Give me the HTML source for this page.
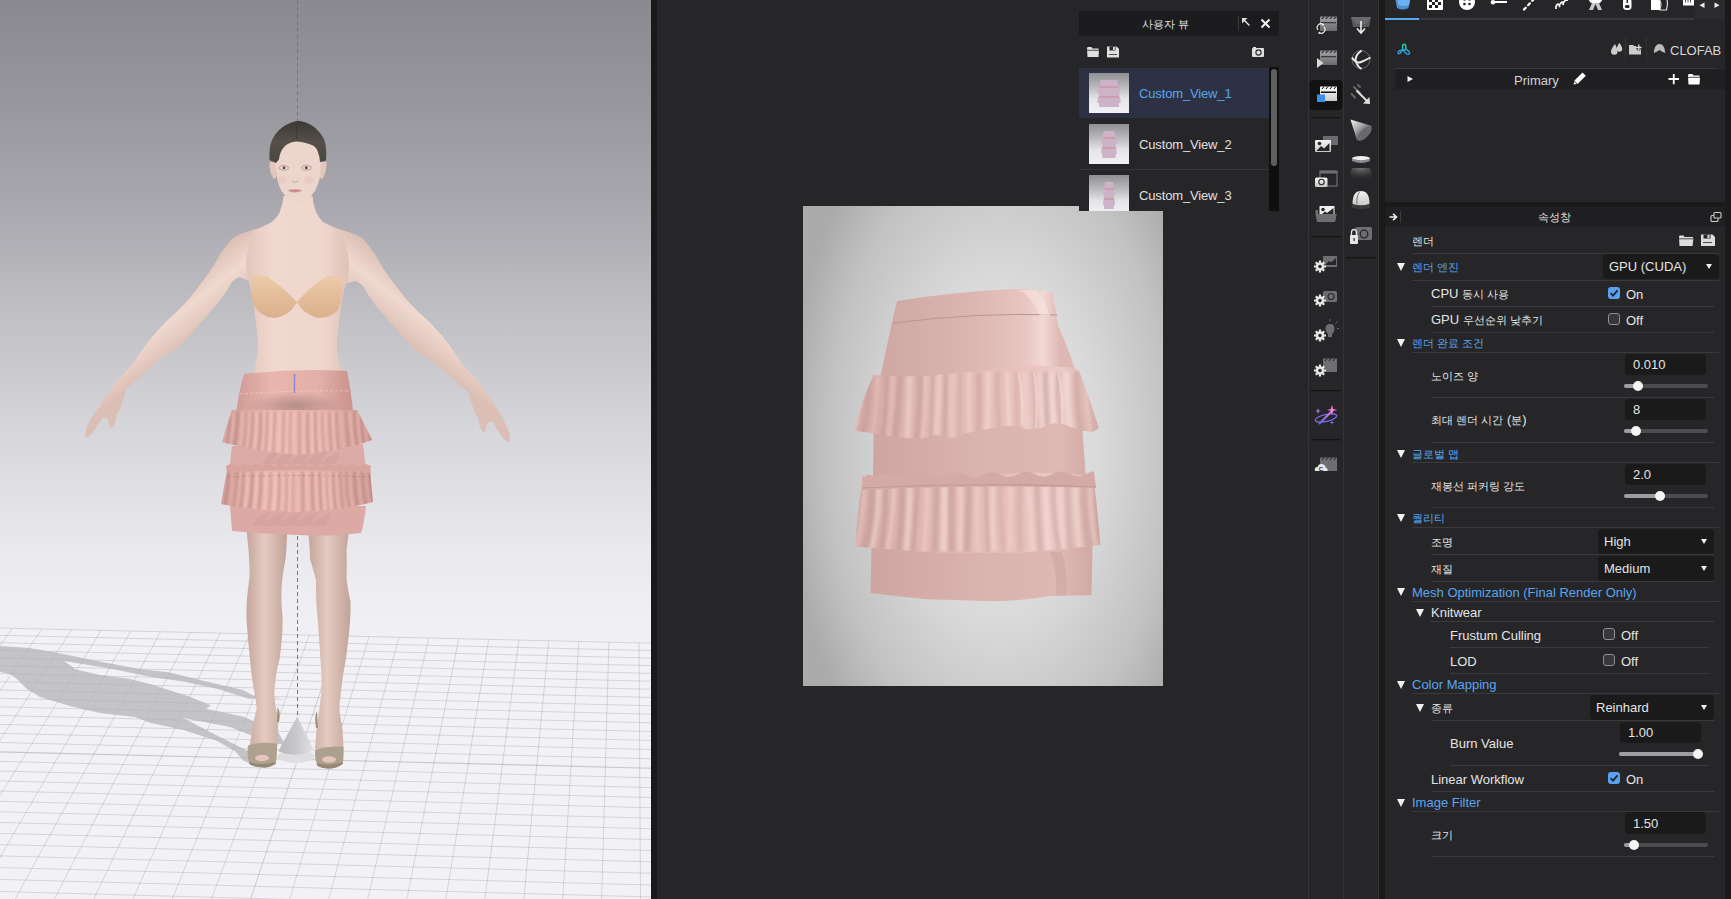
<!DOCTYPE html>
<html><head><meta charset="utf-8">
<style>
*{margin:0;padding:0;box-sizing:border-box}
html,body{width:1731px;height:899px;overflow:hidden;background:#262628;font-family:"Liberation Sans",sans-serif;}
.a{position:absolute}
#vp{left:0;top:0;width:651px;height:899px;background:linear-gradient(#8a8a90 0px,#a6a6ac 200px,#cdcdd2 400px,#e8e8ed 540px,#f1f1f5 640px,#f2f2f6 899px);overflow:hidden}
#div1{left:651px;top:0;width:6px;height:899px;background:#19191a}
#mid{left:657px;top:0;width:651px;height:899px;background:#262628}
#render{left:803px;top:206px;width:360px;height:480px;background:radial-gradient(ellipse 75% 60% at 50% 52%,#e6e6e6 0%,#d2d2d2 45%,#b2b2b2 100%);overflow:hidden}
#tb1{left:1308px;top:0;width:35px;height:899px;background:#262628;border-left:1px solid #343437}
#tb2{left:1343px;top:0;width:36px;height:899px;background:#262628;border-left:1px solid #343437;border-right:1px solid #343437}
#div2{left:1379px;top:0;width:6px;height:899px;background:#19191a}
#rp{left:1385px;top:0;width:340px;height:899px;background:#262628}
#rpedge{left:1725px;top:0;width:6px;height:899px;background:#1a1a1b}
.t{position:absolute;white-space:nowrap;font-size:13px;color:#e4e4e4;line-height:16px}
.k{font-size:11.3px}
.blue{color:#5aa5ee}
.ln{position:absolute;height:1px;background:#3a3a3d}
.inp{position:absolute;background:#1a1a1b;border-radius:4px}
.dd{position:absolute;background:#1a1a1b;border-radius:4px}
.ddtri{position:absolute;width:0;height:0;border-left:3.5px solid transparent;border-right:3.5px solid transparent;border-top:5.5px solid #eee;margin-left:1px}
.trk{position:absolute;height:4px;border-radius:2px;background:#4c4c4e}
.fill{position:absolute;height:4px;border-radius:2px;background:#9e9ea0}
.knob{position:absolute;width:10px;height:10px;border-radius:50%;background:#f4f4f4}
.cb{position:absolute;width:12px;height:12px;border-radius:3px;border:1.3px solid #909092;background:#38383a}
.cbon{position:absolute;width:12px;height:12px;border-radius:3px;background:#5aa2ec}
.cbon svg{position:absolute;left:0;top:0}
.tri{position:absolute;width:0;height:0;border-left:4.5px solid transparent;border-right:4.5px solid transparent;border-top:8px solid #f0f0f0}
.thumb{width:40px;height:40px;background:linear-gradient(#8d8d92 0%,#b8b8bc 35%,#e6e6ea 65%,#f2f2f6 100%);overflow:hidden}
.thumb:before{content:"";position:absolute;left:8px;top:7px;width:24px;height:26px;background:linear-gradient(#d0b8cc,#c4a8c0);border-radius:3px 3px 2px 2px;opacity:.95}
</style></head><body>
<div id="vp" class="a"><svg class="a" style="left:0;top:0" width="651" height="899" viewBox="0 0 651 899">
<defs>
<linearGradient id="bg" gradientUnits="userSpaceOnUse" x1="0" y1="0" x2="0" y2="899">
<stop offset="0" stop-color="#89898f"/><stop offset="0.111" stop-color="#96969c"/><stop offset="0.222" stop-color="#a7a7ad"/><stop offset="0.333" stop-color="#bcbcc1"/><stop offset="0.445" stop-color="#d0d0d5"/><stop offset="0.523" stop-color="#dcdce1"/><stop offset="0.612" stop-color="#e9e9ee"/><stop offset="0.667" stop-color="#eeeef2"/><stop offset="0.712" stop-color="#f1f1f5"/><stop offset="1" stop-color="#f2f2f6"/>
</linearGradient>
</defs>
<rect x="0" y="0" width="651" height="899" fill="url(#bg)"/>
<path d="M-573.82,614.64 L1215.95,656.34 L1507.81,1105.09 L-1156.05,1026.09 Z" fill="#f2f2f6"/>
<g opacity="1"><line x1="-718.80" y1="611.26" x2="1215.95" y2="656.34" stroke="rgba(40,40,60,0.17)" stroke-width="0.9"/><line x1="-729.87" y1="618.22" x2="1220.85" y2="663.88" stroke="rgba(40,40,60,0.17)" stroke-width="0.9"/><line x1="-741.12" y1="625.29" x2="1225.84" y2="671.54" stroke="rgba(40,40,60,0.17)" stroke-width="0.9"/><line x1="-752.55" y1="632.47" x2="1230.91" y2="679.34" stroke="rgba(40,40,60,0.17)" stroke-width="0.9"/><line x1="-764.18" y1="639.78" x2="1236.06" y2="687.27" stroke="rgba(40,40,60,0.17)" stroke-width="0.9"/><line x1="-776.00" y1="647.21" x2="1241.31" y2="695.33" stroke="rgba(40,40,60,0.17)" stroke-width="0.9"/><line x1="-788.03" y1="654.77" x2="1246.65" y2="703.54" stroke="rgba(40,40,60,0.17)" stroke-width="0.9"/><line x1="-800.26" y1="662.46" x2="1252.08" y2="711.90" stroke="rgba(40,40,60,0.17)" stroke-width="0.9"/><line x1="-812.71" y1="670.28" x2="1257.62" y2="720.40" stroke="rgba(40,40,60,0.17)" stroke-width="0.9"/><line x1="-825.37" y1="678.23" x2="1263.25" y2="729.06" stroke="rgba(40,40,60,0.17)" stroke-width="0.9"/><line x1="-838.26" y1="686.33" x2="1268.98" y2="737.87" stroke="rgba(40,40,60,0.17)" stroke-width="0.9"/><line x1="-851.37" y1="694.58" x2="1274.82" y2="746.85" stroke="rgba(40,40,60,0.17)" stroke-width="0.9"/><line x1="-864.73" y1="702.97" x2="1280.77" y2="756.00" stroke="rgba(40,40,60,0.17)" stroke-width="0.9"/><line x1="-878.32" y1="711.51" x2="1286.82" y2="765.31" stroke="rgba(40,40,60,0.17)" stroke-width="0.9"/><line x1="-892.16" y1="720.21" x2="1293.00" y2="774.80" stroke="rgba(40,40,60,0.17)" stroke-width="0.9"/><line x1="-906.26" y1="729.07" x2="1299.29" y2="784.47" stroke="rgba(40,40,60,0.22)" stroke-width="1.1"/><line x1="-920.63" y1="738.10" x2="1305.70" y2="794.33" stroke="rgba(40,40,60,0.17)" stroke-width="0.9"/><line x1="-935.26" y1="747.29" x2="1312.24" y2="804.38" stroke="rgba(40,40,60,0.17)" stroke-width="0.9"/><line x1="-950.17" y1="756.66" x2="1318.90" y2="814.63" stroke="rgba(40,40,60,0.17)" stroke-width="0.9"/><line x1="-965.37" y1="766.21" x2="1325.70" y2="825.08" stroke="rgba(40,40,60,0.17)" stroke-width="0.9"/><line x1="-980.86" y1="775.95" x2="1332.63" y2="835.75" stroke="rgba(40,40,60,0.17)" stroke-width="0.9"/><line x1="-996.65" y1="785.87" x2="1339.71" y2="846.62" stroke="rgba(40,40,60,0.17)" stroke-width="0.9"/><line x1="-1012.76" y1="795.99" x2="1346.93" y2="857.72" stroke="rgba(40,40,60,0.17)" stroke-width="0.9"/><line x1="-1029.19" y1="806.32" x2="1354.30" y2="869.05" stroke="rgba(40,40,60,0.17)" stroke-width="0.9"/><line x1="-1045.94" y1="816.85" x2="1361.82" y2="880.62" stroke="rgba(40,40,60,0.17)" stroke-width="0.9"/><line x1="-1063.04" y1="827.60" x2="1369.50" y2="892.43" stroke="rgba(40,40,60,0.17)" stroke-width="0.9"/><line x1="-1080.50" y1="838.56" x2="1377.34" y2="904.49" stroke="rgba(40,40,60,0.17)" stroke-width="0.9"/><line x1="-1098.31" y1="849.76" x2="1385.36" y2="916.81" stroke="rgba(40,40,60,0.17)" stroke-width="0.9"/><line x1="-1116.50" y1="861.19" x2="1393.55" y2="929.40" stroke="rgba(40,40,60,0.17)" stroke-width="0.9"/><line x1="-1135.07" y1="872.86" x2="1401.91" y2="942.26" stroke="rgba(40,40,60,0.17)" stroke-width="0.9"/><line x1="-1154.05" y1="884.79" x2="1410.47" y2="955.42" stroke="rgba(40,40,60,0.17)" stroke-width="0.9"/><line x1="-1173.43" y1="896.97" x2="1419.22" y2="968.87" stroke="rgba(40,40,60,0.17)" stroke-width="0.9"/><line x1="-1193.24" y1="909.42" x2="1428.16" y2="982.62" stroke="rgba(40,40,60,0.17)" stroke-width="0.9"/><line x1="-1213.49" y1="922.14" x2="1437.32" y2="996.70" stroke="rgba(40,40,60,0.17)" stroke-width="0.9"/><line x1="-1234.19" y1="935.15" x2="1446.68" y2="1011.10" stroke="rgba(40,40,60,0.17)" stroke-width="0.9"/><line x1="-1255.36" y1="948.46" x2="1456.27" y2="1025.84" stroke="rgba(40,40,60,0.17)" stroke-width="0.9"/><line x1="-1277.02" y1="962.07" x2="1466.09" y2="1040.93" stroke="rgba(40,40,60,0.17)" stroke-width="0.9"/><line x1="-1299.18" y1="975.99" x2="1476.14" y2="1056.39" stroke="rgba(40,40,60,0.17)" stroke-width="0.9"/><line x1="-1321.86" y1="990.25" x2="1486.44" y2="1072.23" stroke="rgba(40,40,60,0.17)" stroke-width="0.9"/><line x1="-1345.08" y1="1004.84" x2="1497.00" y2="1088.46" stroke="rgba(40,40,60,0.17)" stroke-width="0.9"/><line x1="-718.80" y1="611.26" x2="-1368.86" y2="1019.78" stroke="rgba(40,40,60,0.17)" stroke-width="0.9"/><line x1="-689.86" y1="611.94" x2="-1326.40" y2="1021.04" stroke="rgba(40,40,60,0.17)" stroke-width="0.9"/><line x1="-660.88" y1="612.61" x2="-1283.90" y2="1022.30" stroke="rgba(40,40,60,0.17)" stroke-width="0.9"/><line x1="-631.89" y1="613.29" x2="-1241.34" y2="1023.56" stroke="rgba(40,40,60,0.17)" stroke-width="0.9"/><line x1="-602.87" y1="613.96" x2="-1198.72" y2="1024.82" stroke="rgba(40,40,60,0.17)" stroke-width="0.9"/><line x1="-573.82" y1="614.64" x2="-1156.05" y2="1026.09" stroke="rgba(40,40,60,0.17)" stroke-width="0.9"/><line x1="-544.75" y1="615.32" x2="-1113.33" y2="1027.36" stroke="rgba(40,40,60,0.17)" stroke-width="0.9"/><line x1="-515.65" y1="616.00" x2="-1070.55" y2="1028.63" stroke="rgba(40,40,60,0.17)" stroke-width="0.9"/><line x1="-486.53" y1="616.67" x2="-1027.71" y2="1029.90" stroke="rgba(40,40,60,0.17)" stroke-width="0.9"/><line x1="-457.39" y1="617.35" x2="-984.83" y2="1031.17" stroke="rgba(40,40,60,0.17)" stroke-width="0.9"/><line x1="-428.21" y1="618.03" x2="-941.88" y2="1032.44" stroke="rgba(40,40,60,0.17)" stroke-width="0.9"/><line x1="-399.02" y1="618.71" x2="-898.88" y2="1033.72" stroke="rgba(40,40,60,0.17)" stroke-width="0.9"/><line x1="-369.80" y1="619.39" x2="-855.83" y2="1034.99" stroke="rgba(40,40,60,0.17)" stroke-width="0.9"/><line x1="-340.55" y1="620.08" x2="-812.72" y2="1036.27" stroke="rgba(40,40,60,0.17)" stroke-width="0.9"/><line x1="-311.28" y1="620.76" x2="-769.56" y2="1037.55" stroke="rgba(40,40,60,0.17)" stroke-width="0.9"/><line x1="-281.98" y1="621.44" x2="-726.34" y2="1038.83" stroke="rgba(40,40,60,0.17)" stroke-width="0.9"/><line x1="-252.66" y1="622.12" x2="-683.06" y2="1040.12" stroke="rgba(40,40,60,0.17)" stroke-width="0.9"/><line x1="-223.31" y1="622.81" x2="-639.73" y2="1041.40" stroke="rgba(40,40,60,0.17)" stroke-width="0.9"/><line x1="-193.93" y1="623.49" x2="-596.35" y2="1042.69" stroke="rgba(40,40,60,0.17)" stroke-width="0.9"/><line x1="-164.53" y1="624.18" x2="-552.90" y2="1043.98" stroke="rgba(40,40,60,0.17)" stroke-width="0.9"/><line x1="-135.11" y1="624.86" x2="-509.40" y2="1045.27" stroke="rgba(40,40,60,0.17)" stroke-width="0.9"/><line x1="-105.66" y1="625.55" x2="-465.85" y2="1046.56" stroke="rgba(40,40,60,0.17)" stroke-width="0.9"/><line x1="-76.18" y1="626.24" x2="-422.24" y2="1047.85" stroke="rgba(40,40,60,0.17)" stroke-width="0.9"/><line x1="-46.68" y1="626.92" x2="-378.57" y2="1049.15" stroke="rgba(40,40,60,0.17)" stroke-width="0.9"/><line x1="-17.15" y1="627.61" x2="-334.85" y2="1050.44" stroke="rgba(40,40,60,0.17)" stroke-width="0.9"/><line x1="12.40" y1="628.30" x2="-291.07" y2="1051.74" stroke="rgba(40,40,60,0.17)" stroke-width="0.9"/><line x1="41.98" y1="628.99" x2="-247.23" y2="1053.04" stroke="rgba(40,40,60,0.17)" stroke-width="0.9"/><line x1="71.58" y1="629.68" x2="-203.34" y2="1054.34" stroke="rgba(40,40,60,0.17)" stroke-width="0.9"/><line x1="101.21" y1="630.37" x2="-159.39" y2="1055.65" stroke="rgba(40,40,60,0.17)" stroke-width="0.9"/><line x1="130.87" y1="631.06" x2="-115.38" y2="1056.95" stroke="rgba(40,40,60,0.17)" stroke-width="0.9"/><line x1="160.55" y1="631.75" x2="-71.31" y2="1058.26" stroke="rgba(40,40,60,0.17)" stroke-width="0.9"/><line x1="190.26" y1="632.44" x2="-27.19" y2="1059.57" stroke="rgba(40,40,60,0.17)" stroke-width="0.9"/><line x1="219.99" y1="633.14" x2="16.99" y2="1060.88" stroke="rgba(40,40,60,0.17)" stroke-width="0.9"/><line x1="249.75" y1="633.83" x2="61.22" y2="1062.19" stroke="rgba(40,40,60,0.17)" stroke-width="0.9"/><line x1="279.54" y1="634.52" x2="105.52" y2="1063.50" stroke="rgba(40,40,60,0.17)" stroke-width="0.9"/><line x1="309.35" y1="635.22" x2="149.87" y2="1064.82" stroke="rgba(40,40,60,0.17)" stroke-width="0.9"/><line x1="339.19" y1="635.91" x2="194.28" y2="1066.14" stroke="rgba(40,40,60,0.21)" stroke-width="0.9"/><line x1="369.05" y1="636.61" x2="238.75" y2="1067.45" stroke="rgba(40,40,60,0.17)" stroke-width="0.9"/><line x1="398.94" y1="637.31" x2="283.27" y2="1068.77" stroke="rgba(40,40,60,0.17)" stroke-width="0.9"/><line x1="428.85" y1="638.00" x2="327.86" y2="1070.10" stroke="rgba(40,40,60,0.17)" stroke-width="0.9"/><line x1="458.80" y1="638.70" x2="372.50" y2="1071.42" stroke="rgba(40,40,60,0.17)" stroke-width="0.9"/><line x1="488.76" y1="639.40" x2="417.20" y2="1072.75" stroke="rgba(40,40,60,0.17)" stroke-width="0.9"/><line x1="518.76" y1="640.10" x2="461.96" y2="1074.07" stroke="rgba(40,40,60,0.17)" stroke-width="0.9"/><line x1="548.78" y1="640.80" x2="506.77" y2="1075.40" stroke="rgba(40,40,60,0.17)" stroke-width="0.9"/><line x1="578.83" y1="641.50" x2="551.65" y2="1076.73" stroke="rgba(40,40,60,0.17)" stroke-width="0.9"/><line x1="608.90" y1="642.20" x2="596.59" y2="1078.07" stroke="rgba(40,40,60,0.17)" stroke-width="0.9"/><line x1="639.00" y1="642.90" x2="641.58" y2="1079.40" stroke="rgba(40,40,60,0.17)" stroke-width="0.9"/><line x1="669.13" y1="643.60" x2="686.63" y2="1080.74" stroke="rgba(40,40,60,0.17)" stroke-width="0.9"/><line x1="699.28" y1="644.30" x2="731.74" y2="1082.07" stroke="rgba(40,40,60,0.17)" stroke-width="0.9"/><line x1="729.46" y1="645.01" x2="776.92" y2="1083.41" stroke="rgba(40,40,60,0.17)" stroke-width="0.9"/><line x1="759.66" y1="645.71" x2="822.15" y2="1084.76" stroke="rgba(40,40,60,0.17)" stroke-width="0.9"/><line x1="789.90" y1="646.42" x2="867.44" y2="1086.10" stroke="rgba(40,40,60,0.17)" stroke-width="0.9"/><line x1="820.15" y1="647.12" x2="912.79" y2="1087.44" stroke="rgba(40,40,60,0.17)" stroke-width="0.9"/><line x1="850.44" y1="647.83" x2="958.20" y2="1088.79" stroke="rgba(40,40,60,0.17)" stroke-width="0.9"/><line x1="880.75" y1="648.53" x2="1003.67" y2="1090.14" stroke="rgba(40,40,60,0.17)" stroke-width="0.9"/><line x1="911.09" y1="649.24" x2="1049.20" y2="1091.49" stroke="rgba(40,40,60,0.17)" stroke-width="0.9"/><line x1="941.46" y1="649.95" x2="1094.78" y2="1092.84" stroke="rgba(40,40,60,0.17)" stroke-width="0.9"/><line x1="971.85" y1="650.66" x2="1140.43" y2="1094.19" stroke="rgba(40,40,60,0.17)" stroke-width="0.9"/><line x1="1002.27" y1="651.36" x2="1186.14" y2="1095.55" stroke="rgba(40,40,60,0.17)" stroke-width="0.9"/><line x1="1032.71" y1="652.07" x2="1231.91" y2="1096.91" stroke="rgba(40,40,60,0.17)" stroke-width="0.9"/><line x1="1063.18" y1="652.78" x2="1277.75" y2="1098.27" stroke="rgba(40,40,60,0.17)" stroke-width="0.9"/><line x1="1093.68" y1="653.49" x2="1323.64" y2="1099.63" stroke="rgba(40,40,60,0.17)" stroke-width="0.9"/><line x1="1124.21" y1="654.21" x2="1369.59" y2="1100.99" stroke="rgba(40,40,60,0.17)" stroke-width="0.9"/><line x1="1154.76" y1="654.92" x2="1415.60" y2="1102.36" stroke="rgba(40,40,60,0.17)" stroke-width="0.9"/><line x1="1185.34" y1="655.63" x2="1461.68" y2="1103.72" stroke="rgba(40,40,60,0.17)" stroke-width="0.9"/></g>
<path d="M0,646 L29,648 L56,652.5 L85,658.5 L110,663.5 L140,669 L170,672.5 L203,680.7 L243,690 L254,696 L286,699.4 L249,698.7 L217,688.7 L183,681.4 L150,676.7 L110,668.5 L64,661 L76,669.5 L100,675 L130,679 L150,684 L190,696.7 L211,705.4 L206,708.7 L243.5,716.8 L278,731.4 L285,745 L268,742 L230,727 L183,718 L216,735 L250,752 L252,764 L243.5,760.8 L235.4,751.5 L216.8,740.8 L183.4,730 L150,722.8 L135,717 L100,713 L70,706 L40,697 L27,689 L17,679 L10,674 L0,672 Z" fill="#b3b3b8" fill-opacity="0.75"/>
<defs>
  <linearGradient id="skinArmL" gradientUnits="userSpaceOnUse" x1="150" y1="300" x2="185" y2="345"><stop offset="0" stop-color="#dabcb1"/><stop offset="0.5" stop-color="#f0d9d0"/><stop offset="1" stop-color="#dcbfb4"/></linearGradient>
  <linearGradient id="skinArmR" gradientUnits="userSpaceOnUse" x1="445" y1="300" x2="410" y2="345"><stop offset="0" stop-color="#dabcb1"/><stop offset="0.5" stop-color="#f0d9d0"/><stop offset="1" stop-color="#dcbfb4"/></linearGradient>
  <linearGradient id="skinTorso" x1="0" y1="0" x2="1" y2="0"><stop offset="0" stop-color="#e2c6bb"/><stop offset="0.25" stop-color="#f0d8ce"/><stop offset="0.75" stop-color="#efd6cc"/><stop offset="1" stop-color="#dfc2b7"/></linearGradient>
  <linearGradient id="skinLeg" x1="0" y1="0" x2="1" y2="0"><stop offset="0" stop-color="#c6a69b"/><stop offset="0.45" stop-color="#e4cbc1"/><stop offset="1" stop-color="#c2a297"/></linearGradient>
  <linearGradient id="skirtG" x1="0" y1="0" x2="1" y2="0"><stop offset="0" stop-color="#cf9a94"/><stop offset="0.3" stop-color="#e8b6ae"/><stop offset="0.7" stop-color="#e4b0a9"/><stop offset="1" stop-color="#c9928c"/></linearGradient>
  <linearGradient id="braG" x1="0" y1="0" x2="0" y2="1"><stop offset="0" stop-color="#edcaa8"/><stop offset="1" stop-color="#d9b08c"/></linearGradient>
  <linearGradient id="hairG" x1="0" y1="0" x2="0" y2="1"><stop offset="0" stop-color="#3c3834"/><stop offset="0.5" stop-color="#55504a"/><stop offset="1" stop-color="#4a4641"/></linearGradient>
  <linearGradient id="coneL" x1="0" y1="0" x2="1" y2="0"><stop offset="0" stop-color="#b8b8bc"/><stop offset="0.5" stop-color="#c8c8cc"/><stop offset="1" stop-color="#e2e2e4"/></linearGradient>
</defs>
<!-- dashed center line -->
<path d="M297.5 0 V124" stroke="#76767c" stroke-width="1" stroke-dasharray="4 3"/>
<path d="M297.5 536 V716" stroke="#76767c" stroke-width="1" stroke-dasharray="4 3"/>
<!-- left arm -->
<path id="armL" d="M272,223 Q258,229 246,232 Q236,235 231,240 Q224,248 219,256 Q214,266 208,274 Q198,288 188,300 Q178,311 170,318 Q165,322 161,327 Q152,336 145,346 Q138,356 131,366 Q123,375 116,382 Q110,390 106,397 Q101,404 97,410 Q92,416 89,422 Q86,428 85,435 Q86,438 88,437 Q93,433 96,428 Q100,422 103,417 L108,419 Q109,425 110,428 Q113,428 114,425 Q117,420 116,416 Q120,410 122,403 Q124,398 125,394 Q126,390 127,388 Q135,381 142,375 Q152,366 161,358 Q170,352 180,346 Q190,335 200,324 Q206,318 210,312 Q215,307 219,302 Q222,297 226,292 Q229,287 232,282 Q235,279 239,277 L252,282 L262,238 Z" fill="url(#skinArmL)"/>
<!-- right arm -->
<path d="M323,223 Q337,229 349,232 Q359,235 364,240 Q371,248 376,256 Q381,266 387,274 Q397,288 407,300 Q417,311 425,318 Q430,322 434,327 Q443,336 450,346 Q457,356 464,366 Q472,375 479,382 Q485,390 489,397 Q494,404 498,410 Q503,418 506,425 Q510,432 510,440 Q509,443 507,442 Q502,438 499,432 Q495,426 492,421 L487,423 Q486,429 485,432 Q482,432 481,429 Q478,424 479,420 Q475,414 473,407 Q471,402 470,398 Q469,394 468,392 Q460,385 453,379 Q443,370 434,362 Q425,356 415,350 Q405,339 395,328 Q389,322 385,316 Q380,311 376,306 Q373,301 369,296 Q366,291 363,286 Q360,283 356,281 L343,284 L333,238 Z" fill="url(#skinArmR)"/>
<!-- torso + neck -->
<path d="M283.5,196 Q282,214 272,222 Q262,227 254,231 Q248,245 246,262 Q246,272 248,279 Q251,289 253,300 Q256,322 258,340 Q259,356 253,374 L342,372 Q336,356 337,340 Q339,322 342,300 Q344,289 347,281 Q349,272 349,262 Q347,245 341,231 Q333,227 323,222 Q314,214 312.5,196 Z" fill="url(#skinTorso)"/>
<!-- bra -->
<path d="M251,277 Q258,274 266,276 Q282,286 297,302 Q290,316 274,318 Q256,316 252,300 Z" fill="url(#braG)"/>
<path d="M297,302 Q310,286 328,276 Q336,275 342,278 Q343,300 338,310 Q330,318 318,318 Q303,314 297,302 Z" fill="url(#braG)"/>
<!-- head -->
<path d="M269.5,162 Q269,172 273.7,179 L276,178 L276,162 Z M326.5,162 Q327,172 322.4,179 L320,178 L320,162 Z" fill="#e2c6bc"/>
<path d="M275.5,160 Q275.5,172 277,178.4 Q279,187 282.2,192 Q288,200 294.8,202.6 Q300,203 304.3,201.6 Q311,197 315,191 Q319,183 320.2,176.2 Q321,168 320.5,158 Q321,146 310,139 Q297,134 285,139 Q275,146 275.5,160 Z" fill="#ecd5cc"/>
<path d="M269.5,160 Q269,146 272,140 Q280,124 298,120.8 Q316,123 324.4,140 Q327,148 326,160.4 L320,162 Q319,150 314,146 Q306,142 297,141.4 Q288,142 284.3,146.7 Q280,151 279,159.4 L276,163 Z" fill="url(#hairG)"/>
<path d="M297,124 Q296,132 297,141" stroke="#2e2a26" stroke-width="0.8" opacity="0.6" fill="none"/>
<g fill="#c98a88" opacity="0.55"><ellipse cx="283.8" cy="167.8" rx="5.5" ry="3"/><ellipse cx="306.5" cy="167.8" rx="5.5" ry="3"/></g>
<g fill="#e4ece4"><ellipse cx="283.8" cy="167.8" rx="3.6" ry="1.6"/><ellipse cx="306.5" cy="167.8" rx="3.6" ry="1.6"/></g>
<g fill="#4a5048"><circle cx="284" cy="167.8" r="1.5"/><circle cx="306.3" cy="167.8" r="1.5"/></g>
<g fill="#e4a8a4" opacity="0.2"><ellipse cx="282" cy="180" rx="5" ry="4"/><ellipse cx="309" cy="180" rx="5" ry="4"/></g>
<path d="M292 181 Q294.8 184 298 181" stroke="#c8a098" stroke-width="0.9" fill="none"/>
<path d="M287.5,190.5 Q294.8,188 302.2,190.5 Q295,194.5 287.5,190.5 Z" fill="#cc8e8c"/>
<!-- legs -->
<path d="M247,528 L247,535 Q250,558 249.5,578 Q246,600 246.5,620 Q248,640 250,660 Q252,680 254,690 Q257,705 256.5,710 Q252,725 250,745 L277.5,745 Q278,725 278.5,718 Q274,705 274.5,690 Q276,670 279.5,660 Q283,635 282.5,616 Q281,600 281.5,590 Q282,575 285.5,559 Q287,545 287,528 Z" fill="url(#skinLeg)"/>
<path d="M308.5,528 L308.5,535 Q310,550 310,559 Q314,572 316,580 Q316,595 316.5,605 Q319,635 320.5,660 Q322,680 321.5,690 Q320,705 319,712 Q316,730 315,749 L343.5,749 Q343,735 342,725 Q339,712 339.5,705 Q341,690 343,675 Q346,660 347,650 Q351,620 350.5,602 Q347,585 346.5,578 Q347,560 346.5,550 Q348,540 349,528 Z" fill="url(#skinLeg)"/>
<!-- skirt waistband -->
<path d="M244,374 Q296,368 347,371 Q351,390 353,412 L236,414 Q239,390 244,374 Z" fill="url(#skirtG)"/>
<radialGradient id="wbShade"><stop offset="0" stop-color="#a07c78" stop-opacity="0.7"/><stop offset="0.6" stop-color="#a88480" stop-opacity="0.35"/><stop offset="1" stop-color="#b08a86" stop-opacity="0"/></radialGradient>
<ellipse cx="295" cy="406" rx="48" ry="14" fill="url(#wbShade)"/>
<path d="M240,394 Q296,390 350,391" stroke="#f4d0c8" stroke-width="0.8" stroke-dasharray="3 2" fill="none" opacity="0.8"/>
<path d="M294.5,374 V393" stroke="#8c88d0" stroke-width="1.5"/>
<!-- skirt lower layer -->
<path d="M230,506 L366,506 Q364,525 361,533 Q330,537 298,535 Q262,534 232,531 Z" fill="#dca9a4"/><path d="M252,526 Q258,514 270,512 L262,526 Q272,514 286,512 L278,526 Q288,514 302,512 L294,526 Q304,514 318,512 L310,526 Q320,516 330,514 L326,526 Z" fill="#c99590" opacity="0.28"/>
<!-- middle band -->
<path d="M232,446 L363,444 L366,470 L229,471 Z" fill="#dcaba6"/><path d="M262,464 Q268,452 280,450 L272,464 Q282,452 296,450 L288,464 Q298,452 312,450 L304,464 Q314,452 328,450 L320,464 Q330,454 340,452 L336,464 Z" fill="#c99590" opacity="0.3"/>
<!-- ruffle 2 -->
<path d="M228,467 Q298,462 370,467 Q371,485 373,502 Q345,510 298,512 Q250,510 221,504 Q224,485 228,467 Z" fill="url(#skirtG)"/>
<path d="M226,466 Q232,462 238,466 Q244,462 250,466 Q256,462 262,466 Q268,462 274,466 Q280,462 286,466 Q292,462 298,466 Q304,462 310,466 Q316,462 322,466 Q328,462 334,466 Q340,462 346,466 Q352,462 358,466 Q364,462 371,466 L370,473 Q298,467 227,473 Z" fill="#d9a49e"/>
<path d="M228,477 Q298,474 370,477" stroke="#b04848" stroke-width="0.8" stroke-dasharray="2 3" opacity="0.6" fill="none"/>
<!-- ruffle 1 -->
<path d="M232,410 L357,410 Q365,425 372,440 Q345,450 298,455 Q252,450 222,442 Q227,425 232,410 Z" fill="url(#skirtG)"/>
<!-- skirt folds -->
<clipPath id="cf1"><path d="M232,410 L357,410 Q365,425 372,440 Q345,450 298,455 Q252,450 222,442 Q227,425 232,410 Z"/></clipPath>
<clipPath id="cf2"><path d="M228,467 Q298,462 370,467 Q371,485 373,502 Q345,510 298,512 Q250,510 221,504 Q224,485 228,467 Z"/></clipPath>
<filter id="fb2" x="-5%" y="-5%" width="110%" height="110%"><feGaussianBlur stdDeviation="0.9"/></filter>
<g clip-path="url(#cf1)"><g filter="url(#fb2)"><path d="M222.0,412 Q222.2,434.0 216.0,456" stroke="#b27c76" stroke-width="3.4" opacity="0.34" fill="none"/><path d="M225.9,412 Q225.9,434.0 220.2,455" stroke="#f8d8d0" stroke-width="2.4" opacity="0.35" fill="none"/><path d="M229.8,412 Q230.2,434.0 224.4,456" stroke="#b27c76" stroke-width="3.2" opacity="0.27" fill="none"/><path d="M233.8,412 Q233.2,434.0 228.7,455" stroke="#f8d8d0" stroke-width="1.6" opacity="0.50" fill="none"/><path d="M237.9,412 Q236.5,434.0 233.1,456" stroke="#b27c76" stroke-width="3.5" opacity="0.44" fill="none"/><path d="M242.2,412 Q242.7,434.0 237.8,455" stroke="#f8d8d0" stroke-width="2.4" opacity="0.34" fill="none"/><path d="M246.6,412 Q246.7,434.0 242.6,456" stroke="#b27c76" stroke-width="2.1" opacity="0.29" fill="none"/><path d="M249.7,412 Q248.9,434.0 245.8,455" stroke="#f8d8d0" stroke-width="1.5" opacity="0.42" fill="none"/><path d="M252.7,412 Q253.7,434.0 249.1,456" stroke="#b27c76" stroke-width="2.8" opacity="0.38" fill="none"/><path d="M256.6,412 Q256.6,434.0 253.3,455" stroke="#f8d8d0" stroke-width="2.5" opacity="0.41" fill="none"/><path d="M260.5,412 Q261.9,434.0 257.5,456" stroke="#b27c76" stroke-width="3.5" opacity="0.42" fill="none"/><path d="M264.0,412 Q264.6,434.0 261.3,455" stroke="#f8d8d0" stroke-width="2.0" opacity="0.36" fill="none"/><path d="M267.6,412 Q266.3,434.0 265.2,456" stroke="#b27c76" stroke-width="3.1" opacity="0.33" fill="none"/><path d="M271.1,412 Q272.2,434.0 269.0,455" stroke="#f8d8d0" stroke-width="2.1" opacity="0.54" fill="none"/><path d="M274.7,412 Q273.2,434.0 272.9,456" stroke="#b27c76" stroke-width="2.3" opacity="0.43" fill="none"/><path d="M279.4,412 Q279.3,434.0 278.0,455" stroke="#f8d8d0" stroke-width="3.0" opacity="0.40" fill="none"/><path d="M284.1,412 Q284.5,434.0 283.0,456" stroke="#b27c76" stroke-width="3.2" opacity="0.30" fill="none"/><path d="M287.3,412 Q286.0,434.0 286.4,455" stroke="#f8d8d0" stroke-width="2.0" opacity="0.54" fill="none"/><path d="M290.4,412 Q289.3,434.0 289.8,456" stroke="#b27c76" stroke-width="2.4" opacity="0.27" fill="none"/><path d="M294.9,412 Q293.6,434.0 294.7,455" stroke="#f8d8d0" stroke-width="2.7" opacity="0.34" fill="none"/><path d="M299.4,412 Q299.3,434.0 299.6,456" stroke="#b27c76" stroke-width="2.3" opacity="0.40" fill="none"/><path d="M303.6,412 Q302.4,434.0 304.0,455" stroke="#f8d8d0" stroke-width="2.5" opacity="0.33" fill="none"/><path d="M307.7,412 Q306.8,434.0 308.5,456" stroke="#b27c76" stroke-width="2.4" opacity="0.44" fill="none"/><path d="M311.5,412 Q312.4,434.0 312.6,455" stroke="#f8d8d0" stroke-width="2.0" opacity="0.52" fill="none"/><path d="M315.4,412 Q315.0,434.0 316.8,456" stroke="#b27c76" stroke-width="3.3" opacity="0.38" fill="none"/><path d="M318.8,412 Q317.6,434.0 320.5,455" stroke="#f8d8d0" stroke-width="3.0" opacity="0.35" fill="none"/><path d="M322.2,412 Q323.0,434.0 324.2,456" stroke="#b27c76" stroke-width="2.5" opacity="0.31" fill="none"/><path d="M325.7,412 Q324.4,434.0 328.0,455" stroke="#f8d8d0" stroke-width="1.6" opacity="0.45" fill="none"/><path d="M329.2,412 Q329.5,434.0 331.8,456" stroke="#b27c76" stroke-width="2.6" opacity="0.34" fill="none"/><path d="M332.7,412 Q334.1,434.0 335.5,455" stroke="#f8d8d0" stroke-width="2.2" opacity="0.44" fill="none"/><path d="M336.2,412 Q335.3,434.0 339.3,456" stroke="#b27c76" stroke-width="2.2" opacity="0.43" fill="none"/><path d="M340.9,412 Q341.9,434.0 344.4,455" stroke="#f8d8d0" stroke-width="1.9" opacity="0.35" fill="none"/><path d="M345.7,412 Q347.0,434.0 349.5,456" stroke="#b27c76" stroke-width="2.3" opacity="0.44" fill="none"/><path d="M350.1,412 Q351.3,434.0 354.4,455" stroke="#f8d8d0" stroke-width="2.4" opacity="0.41" fill="none"/><path d="M354.6,412 Q353.2,434.0 359.2,456" stroke="#b27c76" stroke-width="3.4" opacity="0.30" fill="none"/><path d="M357.8,412 Q358.4,434.0 362.7,455" stroke="#f8d8d0" stroke-width="1.9" opacity="0.51" fill="none"/><path d="M361.0,412 Q360.4,434.0 366.1,456" stroke="#b27c76" stroke-width="2.3" opacity="0.39" fill="none"/><path d="M365.2,412 Q363.9,434.0 370.7,455" stroke="#f8d8d0" stroke-width="1.8" opacity="0.44" fill="none"/><path d="M369.4,412 Q369.8,434.0 375.2,456" stroke="#b27c76" stroke-width="2.4" opacity="0.43" fill="none"/><path d="M374.1,412 Q373.2,434.0 380.3,455" stroke="#f8d8d0" stroke-width="1.5" opacity="0.37" fill="none"/></g></g>
<g clip-path="url(#cf2)"><g filter="url(#fb2)"><path d="M220.0,472 Q218.7,493.0 213.8,514" stroke="#b27c76" stroke-width="2.3" opacity="0.32" fill="none"/><path d="M223.9,472 Q224.1,493.0 218.0,513" stroke="#f8d8d0" stroke-width="1.7" opacity="0.39" fill="none"/><path d="M227.8,472 Q229.2,493.0 222.2,514" stroke="#b27c76" stroke-width="3.0" opacity="0.39" fill="none"/><path d="M232.6,472 Q232.8,493.0 227.4,513" stroke="#f8d8d0" stroke-width="1.7" opacity="0.31" fill="none"/><path d="M237.3,472 Q238.6,493.0 232.5,514" stroke="#b27c76" stroke-width="3.1" opacity="0.44" fill="none"/><path d="M240.4,472 Q238.9,493.0 235.8,513" stroke="#f8d8d0" stroke-width="2.5" opacity="0.42" fill="none"/><path d="M243.4,472 Q242.9,493.0 239.1,514" stroke="#b27c76" stroke-width="3.5" opacity="0.27" fill="none"/><path d="M247.9,472 Q248.0,493.0 243.9,513" stroke="#f8d8d0" stroke-width="2.6" opacity="0.53" fill="none"/><path d="M252.3,472 Q253.0,493.0 248.7,514" stroke="#b27c76" stroke-width="3.2" opacity="0.43" fill="none"/><path d="M256.8,472 Q256.4,493.0 253.6,513" stroke="#f8d8d0" stroke-width="2.5" opacity="0.53" fill="none"/><path d="M261.3,472 Q261.0,493.0 258.4,514" stroke="#b27c76" stroke-width="3.2" opacity="0.42" fill="none"/><path d="M266.0,472 Q266.2,493.0 263.5,513" stroke="#f8d8d0" stroke-width="2.4" opacity="0.40" fill="none"/><path d="M270.8,472 Q271.1,493.0 268.6,514" stroke="#b27c76" stroke-width="2.1" opacity="0.38" fill="none"/><path d="M274.9,472 Q276.4,493.0 273.1,513" stroke="#f8d8d0" stroke-width="2.8" opacity="0.48" fill="none"/><path d="M279.1,472 Q279.8,493.0 277.6,514" stroke="#b27c76" stroke-width="2.9" opacity="0.34" fill="none"/><path d="M282.9,472 Q283.9,493.0 281.7,513" stroke="#f8d8d0" stroke-width="1.6" opacity="0.49" fill="none"/><path d="M286.7,472 Q287.0,493.0 285.8,514" stroke="#b27c76" stroke-width="2.7" opacity="0.30" fill="none"/><path d="M289.7,472 Q290.3,493.0 289.1,513" stroke="#f8d8d0" stroke-width="2.2" opacity="0.45" fill="none"/><path d="M292.8,472 Q292.0,493.0 292.4,514" stroke="#b27c76" stroke-width="2.0" opacity="0.31" fill="none"/><path d="M297.6,472 Q298.2,493.0 297.6,513" stroke="#f8d8d0" stroke-width="1.8" opacity="0.34" fill="none"/><path d="M302.5,472 Q302.9,493.0 302.9,514" stroke="#b27c76" stroke-width="2.7" opacity="0.43" fill="none"/><path d="M307.3,472 Q306.8,493.0 308.1,513" stroke="#f8d8d0" stroke-width="2.5" opacity="0.35" fill="none"/><path d="M312.1,472 Q313.0,493.0 313.2,514" stroke="#b27c76" stroke-width="3.4" opacity="0.43" fill="none"/><path d="M315.9,472 Q315.6,493.0 317.4,513" stroke="#f8d8d0" stroke-width="2.4" opacity="0.38" fill="none"/><path d="M319.8,472 Q319.8,493.0 321.6,514" stroke="#b27c76" stroke-width="3.3" opacity="0.42" fill="none"/><path d="M323.1,472 Q323.7,493.0 325.1,513" stroke="#f8d8d0" stroke-width="2.9" opacity="0.37" fill="none"/><path d="M326.3,472 Q326.2,493.0 328.7,514" stroke="#b27c76" stroke-width="2.4" opacity="0.29" fill="none"/><path d="M329.7,472 Q329.4,493.0 332.3,513" stroke="#f8d8d0" stroke-width="2.4" opacity="0.42" fill="none"/><path d="M333.0,472 Q334.0,493.0 335.9,514" stroke="#b27c76" stroke-width="3.5" opacity="0.34" fill="none"/><path d="M336.7,472 Q335.4,493.0 339.8,513" stroke="#f8d8d0" stroke-width="1.5" opacity="0.52" fill="none"/><path d="M340.3,472 Q340.9,493.0 343.7,514" stroke="#b27c76" stroke-width="2.9" opacity="0.31" fill="none"/><path d="M343.4,472 Q344.2,493.0 347.0,513" stroke="#f8d8d0" stroke-width="1.5" opacity="0.33" fill="none"/><path d="M346.5,472 Q345.0,493.0 350.4,514" stroke="#b27c76" stroke-width="3.2" opacity="0.30" fill="none"/><path d="M350.4,472 Q349.3,493.0 354.6,513" stroke="#f8d8d0" stroke-width="1.6" opacity="0.46" fill="none"/><path d="M354.3,472 Q354.7,493.0 358.8,514" stroke="#b27c76" stroke-width="3.0" opacity="0.41" fill="none"/><path d="M358.2,472 Q359.5,493.0 363.0,513" stroke="#f8d8d0" stroke-width="2.5" opacity="0.35" fill="none"/><path d="M362.1,472 Q361.1,493.0 367.2,514" stroke="#b27c76" stroke-width="2.0" opacity="0.34" fill="none"/><path d="M366.0,472 Q366.7,493.0 371.5,513" stroke="#f8d8d0" stroke-width="1.8" opacity="0.37" fill="none"/><path d="M370.0,472 Q370.6,493.0 375.8,514" stroke="#b27c76" stroke-width="2.8" opacity="0.37" fill="none"/><path d="M373.7,472 Q374.4,493.0 379.7,513" stroke="#f8d8d0" stroke-width="2.1" opacity="0.50" fill="none"/></g></g>
<!-- shoes -->
<path d="M248,745.5 Q262,741 277,744 Q277.5,756 275.5,764 Q268,768 263.9,767.5 Q253,767 249.5,764 Q246.5,756 248,745.5 Z" fill="#aea28e"/>
<path d="M315.3,749.8 Q330,745 343.5,747 Q344,757 342.7,764 Q336,768.5 329,768.6 Q321,768 317.4,765.7 Q314,757 315.3,749.8 Z" fill="#ada18d"/>
<path d="M249.5,762 Q262,766 275.5,762 L275.5,764 Q268,768 263.9,767.5 Q253,767 249.5,764 Z M317,763 Q330,767 342.7,762 L342.7,764 Q336,768.5 329,768.6 Q321,768 317.4,765.7 Z" fill="#948874"/>
<g fill="#e6c4bc"><ellipse cx="262" cy="758" rx="7" ry="3.2"/><ellipse cx="329" cy="759.5" rx="7" ry="3.2"/></g>
<path d="M277.5,707 Q281,712 279,722 L277,722 Z M317,711 Q314,716 316,728 L318,728 Z" fill="#9e8e78"/>
<!-- cone -->
<ellipse cx="296" cy="756.5" rx="18.5" ry="6.5" fill="#dedee0"/>
<path d="M297.2,716.5 L278.4,751.2 Q296,759 313.8,749.8 Z" fill="url(#coneL)"/>

</svg></div>
<div id="div1" class="a"></div>
<div id="mid" class="a"></div>
<div id="render" class="a"><svg class="a" style="left:0;top:0" width="360" height="480" viewBox="803 206 360 480">
<defs>
  <radialGradient id="rbg" gradientUnits="userSpaceOnUse" cx="1000" cy="450" r="215" gradientTransform="translate(1000 450) scale(1 1.75) translate(-1000 -450)">
    <stop offset="0" stop-color="#e6e6e6"/><stop offset="0.45" stop-color="#dadada"/><stop offset="0.8" stop-color="#c2c2c2"/><stop offset="1" stop-color="#ababab"/>
  </radialGradient>
  <linearGradient id="sk1" gradientUnits="userSpaceOnUse" x1="850" y1="0" x2="1100" y2="0">
    <stop offset="0" stop-color="#d2a6a2"/><stop offset="0.25" stop-color="#e0b6b2"/><stop offset="0.6" stop-color="#e6beba"/><stop offset="0.85" stop-color="#eccac6"/><stop offset="1" stop-color="#d4aaa6"/>
  </linearGradient>
  <linearGradient id="sk2" gradientUnits="userSpaceOnUse" x1="850" y1="0" x2="1100" y2="0">
    <stop offset="0" stop-color="#cba29e"/><stop offset="0.5" stop-color="#dab2ae"/><stop offset="0.85" stop-color="#deb8b4"/><stop offset="1" stop-color="#cda4a0"/>
  </linearGradient>
  <linearGradient id="wb" gradientUnits="userSpaceOnUse" x1="890" y1="0" x2="1060" y2="0">
    <stop offset="0" stop-color="#d0a8a4"/><stop offset="0.5" stop-color="#dcb6b2"/><stop offset="0.8" stop-color="#e8c6c2"/><stop offset="0.9" stop-color="#f2d8d4"/><stop offset="1" stop-color="#deb8b4"/>
  </linearGradient>
<filter id="fblur" x="-10%" y="-10%" width="120%" height="120%"><feGaussianBlur stdDeviation="1.6"/></filter>
</defs>
<rect x="803" y="206" width="360" height="480" fill="url(#rbg)"/>

<path d="M871.5,546 L1092.5,546 L1091.5,595 Q1060,596 1051,596 Q1010,602 988,601 Q950,600 924,599 Q895,596 870.5,593 Z" fill="url(#sk2)"/>
<path d="M1050,552 Q1058,575 1056,596 L1066,595 Q1068,572 1062,552 Z" fill="#c9a29f" opacity="0.5"/>
<path d="M874,400 L1080,396 L1086,480 L873,482 Z" fill="url(#sk2)"/>
<path d="M861.5,487 Q864,476 867.5,474.3 Q880,478 905,481 Q935,480 965,478 Q995,475 1017,473 Q1050,472 1085,475 Q1096,478 1094.3,484 Q1098,515 1100.3,545 Q1070,548.6 1025,552.4 Q980,553 935,552.4 Q890,549.4 855.5,546.4 Q857,515 861.5,487 Z" fill="url(#sk1)"/>
<clipPath id="cr2"><path d="M861.5,487 Q864,476 867.5,474.3 Q880,478 905,481 Q935,480 965,478 Q995,475 1017,473 Q1050,472 1085,475 Q1096,478 1094.3,484 Q1098,515 1100.3,545 Q1070,548.6 1025,552.4 Q980,553 935,552.4 Q890,549.4 855.5,546.4 Q857,515 861.5,487 Z"/></clipPath>
<g clip-path="url(#cr2)"><g filter="url(#fblur)"><path d="M858.0,480.0 Q858.2,516.0 850.2,552.0" stroke="#a88481" stroke-width="5.8" opacity="0.27" fill="none"/><path d="M865.0,480.0 Q863.2,516.0 855.7,551.0" stroke="#fbe9e5" stroke-width="5.5" opacity="0.26" fill="none"/><path d="M871.9,480.0 Q873.9,516.0 865.4,552.0" stroke="#a88481" stroke-width="6.5" opacity="0.25" fill="none"/><path d="M878.8,480.0 Q879.4,516.0 871.0,551.0" stroke="#fbe9e5" stroke-width="4.9" opacity="0.42" fill="none"/><path d="M885.8,480.0 Q886.7,516.0 880.9,552.0" stroke="#a88481" stroke-width="4.2" opacity="0.29" fill="none"/><path d="M893.9,480.0 Q894.2,516.0 887.5,551.0" stroke="#fbe9e5" stroke-width="3.1" opacity="0.42" fill="none"/><path d="M902.0,480.0 Q902.8,516.0 898.9,552.0" stroke="#a88481" stroke-width="6.1" opacity="0.31" fill="none"/><path d="M909.9,480.0 Q909.4,516.0 906.4,551.0" stroke="#fbe9e5" stroke-width="4.3" opacity="0.43" fill="none"/><path d="M917.7,480.0 Q916.1,516.0 912.6,552.0" stroke="#a88481" stroke-width="4.7" opacity="0.32" fill="none"/><path d="M927.3,480.0 Q927.0,516.0 924.1,551.0" stroke="#fbe9e5" stroke-width="3.9" opacity="0.33" fill="none"/><path d="M936.8,480.0 Q936.2,516.0 934.6,552.0" stroke="#a88481" stroke-width="5.8" opacity="0.31" fill="none"/><path d="M944.3,480.0 Q945.0,516.0 943.5,551.0" stroke="#fbe9e5" stroke-width="5.6" opacity="0.45" fill="none"/><path d="M951.9,480.0 Q950.5,516.0 951.7,552.0" stroke="#a88481" stroke-width="6.9" opacity="0.31" fill="none"/><path d="M960.5,480.0 Q960.8,516.0 959.8,551.0" stroke="#fbe9e5" stroke-width="3.6" opacity="0.41" fill="none"/><path d="M969.2,480.0 Q968.4,516.0 966.9,552.0" stroke="#a88481" stroke-width="6.6" opacity="0.32" fill="none"/><path d="M977.5,480.0 Q975.9,516.0 978.1,551.0" stroke="#fbe9e5" stroke-width="4.2" opacity="0.24" fill="none"/><path d="M985.8,480.0 Q986.9,516.0 987.7,552.0" stroke="#a88481" stroke-width="4.1" opacity="0.27" fill="none"/><path d="M993.0,480.0 Q991.2,516.0 994.3,551.0" stroke="#fbe9e5" stroke-width="4.0" opacity="0.42" fill="none"/><path d="M1000.2,480.0 Q1000.2,516.0 1003.4,552.0" stroke="#a88481" stroke-width="4.9" opacity="0.19" fill="none"/><path d="M1010.1,480.0 Q1010.5,516.0 1009.5,551.0" stroke="#fbe9e5" stroke-width="3.6" opacity="0.30" fill="none"/><path d="M1020.0,480.0 Q1018.6,516.0 1020.6,552.0" stroke="#a88481" stroke-width="6.6" opacity="0.22" fill="none"/><path d="M1028.5,480.0 Q1030.3,516.0 1032.5,551.0" stroke="#fbe9e5" stroke-width="4.1" opacity="0.32" fill="none"/><path d="M1036.9,480.0 Q1037.5,516.0 1040.8,552.0" stroke="#a88481" stroke-width="5.7" opacity="0.27" fill="none"/><path d="M1045.0,480.0 Q1046.7,516.0 1048.5,551.0" stroke="#fbe9e5" stroke-width="4.3" opacity="0.38" fill="none"/><path d="M1053.1,480.0 Q1052.3,516.0 1059.4,552.0" stroke="#a88481" stroke-width="5.6" opacity="0.26" fill="none"/><path d="M1060.0,480.0 Q1058.1,516.0 1064.1,551.0" stroke="#fbe9e5" stroke-width="4.7" opacity="0.21" fill="none"/><path d="M1067.0,480.0 Q1067.5,516.0 1070.5,552.0" stroke="#a88481" stroke-width="5.9" opacity="0.25" fill="none"/><path d="M1075.4,480.0 Q1076.1,516.0 1080.1,551.0" stroke="#fbe9e5" stroke-width="5.1" opacity="0.38" fill="none"/><path d="M1083.9,480.0 Q1082.1,516.0 1090.9,552.0" stroke="#a88481" stroke-width="6.9" opacity="0.22" fill="none"/><path d="M1090.0,480.0 Q1089.8,516.0 1096.6,551.0" stroke="#fbe9e5" stroke-width="4.0" opacity="0.29" fill="none"/><path d="M1096.1,480.0 Q1095.5,516.0 1103.5,552.0" stroke="#a88481" stroke-width="4.9" opacity="0.23" fill="none"/><path d="M1103.3,480.0 Q1104.4,516.0 1108.5,551.0" stroke="#fbe9e5" stroke-width="4.7" opacity="0.38" fill="none"/></g></g>
<path d="M862.0,476.0 L864.0,476.9 L866.0,477.6 L868.0,478.2 L870.0,478.4 L872.0,478.3 L874.0,477.9 L876.0,477.3 L878.0,476.4 L880.0,475.5 L882.0,474.6 L884.0,473.9 L886.0,473.4 L888.0,473.2 L890.0,473.4 L892.0,473.9 L894.0,474.6 L896.0,475.4 L898.0,476.3 L900.0,477.1 L902.0,477.7 L904.0,478.0 L906.0,478.0 L908.0,477.7 L910.0,477.1 L912.0,476.3 L914.0,475.4 L916.0,474.5 L918.0,473.7 L920.0,473.2 L922.0,472.9 L924.0,473.0 L926.0,473.4 L928.0,474.0 L930.0,474.8 L932.0,475.7 L934.0,476.5 L936.0,477.2 L938.0,477.6 L940.0,477.7 L942.0,477.5 L944.0,477.0 L946.0,476.2 L948.0,475.3 L950.0,474.4 L952.0,473.6 L954.0,473.0 L956.0,472.6 L958.0,472.6 L960.0,472.9 L962.0,473.5 L964.0,474.2 L966.0,475.1 L968.0,476.0 L970.0,476.7 L972.0,477.2 L974.0,477.4 L976.0,477.2 L978.0,476.8 L980.0,476.1 L982.0,475.2 L984.0,474.3 L986.0,473.4 L988.0,472.8 L990.0,472.3 L992.0,472.2 L994.0,472.4 L996.0,472.9 L998.0,473.7 L1000.0,474.5 L1002.0,475.4 L1004.0,476.2 L1006.0,476.7 L1008.0,477.0 L1010.0,477.0 L1012.0,476.6 L1014.0,476.0 L1016.0,475.1 L1018.0,474.2 L1020.0,473.3 L1022.0,472.6 L1024.0,472.1 L1026.0,471.9 L1028.0,472.0 L1030.0,472.4 L1032.0,473.1 L1034.0,473.9 L1036.0,474.8 L1038.0,475.6 L1040.0,476.3 L1042.0,476.6 L1044.0,476.7 L1046.0,476.4 L1048.0,475.8 L1050.0,475.0 L1052.0,474.1 L1054.0,473.2 L1056.0,472.4 L1058.0,471.8 L1060.0,471.5 L1062.0,471.6 L1064.0,471.9 L1066.0,472.5 L1068.0,473.3 L1070.0,474.2 L1072.0,475.1 L1074.0,475.8 L1076.0,476.2 L1078.0,476.3 L1080.0,476.2 L1082.0,475.7 L1084.0,474.9 L1086.0,474.0 L1088.0,473.1 L1090.0,472.3 L1092.0,471.6 L1094.0,471.2 L1096,488 Q980,484 862,490 Z" fill="#d3aaa6"/>
<path d="M862,488 Q980,482 1096,487" stroke="#b88e8a" stroke-width="1.2" fill="none" opacity="0.6"/>
<path d="M897,301 Q960,291 1014,289 Q1035,289 1052,292 Q1056,310 1058,326 Q1068,346 1080,385 L878,388 Q889,335 897,301 Z" fill="url(#wb)"/>
<path d="M893,323 Q980,312 1057,315" stroke="#b89592" stroke-width="1" fill="none"/>
<path d="M1018,290 Q1032,296 1040,316 L1050,316 Q1044,298 1036,290 Z" fill="#f8e6e2" opacity="0.55"/>
<path d="M873.5,375 Q900,376 920,376.5 Q950,374 980,370.5 Q1003,367 1025,365.3 Q1050,366 1070.3,367.5 Q1076,368 1079.3,371.3 Q1090,400 1098.8,427.6 Q1096,431 1092.8,432 Q1086,431 1079.3,430.6 Q1066,424 1055.3,423 Q1047,425 1040.3,428.3 Q1032,430 1025.2,429 Q1017,426 1010.2,426 Q998,426 987.7,429 Q975,431 965,433.6 Q957,438 950.1,438 Q942,435 935.1,435 Q928,438 920.1,438.8 Q908,438 897.6,437.4 Q886,436 875,433.6 Q864,432 854,430.6 Q862,400 873.5,375 Z" fill="url(#sk1)"/>
<clipPath id="cr1"><path d="M873.5,375 Q900,376 920,376.5 Q950,374 980,370.5 Q1003,367 1025,365.3 Q1050,366 1070.3,367.5 Q1076,368 1079.3,371.3 Q1090,400 1098.8,427.6 Q1096,431 1092.8,432 Q1086,431 1079.3,430.6 Q1066,424 1055.3,423 Q1047,425 1040.3,428.3 Q1032,430 1025.2,429 Q1017,426 1010.2,426 Q998,426 987.7,429 Q975,431 965,433.6 Q957,438 950.1,438 Q942,435 935.1,435 Q928,438 920.1,438.8 Q908,438 897.6,437.4 Q886,436 875,433.6 Q864,432 854,430.6 Q862,400 873.5,375 Z"/></clipPath>
<g clip-path="url(#cr1)"><g filter="url(#fblur)"><path d="M852.0,372.0 Q853.0,406.0 845.7,440.0" stroke="#a88481" stroke-width="6.8" opacity="0.28" fill="none"/><path d="M860.5,372.0 Q862.2,406.0 851.2,439.0" stroke="#fbe9e5" stroke-width="4.4" opacity="0.44" fill="none"/><path d="M869.0,372.0 Q870.6,406.0 861.0,440.0" stroke="#a88481" stroke-width="5.4" opacity="0.21" fill="none"/><path d="M877.6,372.0 Q877.8,406.0 871.5,439.0" stroke="#fbe9e5" stroke-width="3.0" opacity="0.25" fill="none"/><path d="M886.2,372.0 Q887.8,406.0 881.8,440.0" stroke="#a88481" stroke-width="4.5" opacity="0.29" fill="none"/><path d="M893.3,372.0 Q891.8,406.0 888.4,439.0" stroke="#fbe9e5" stroke-width="3.4" opacity="0.20" fill="none"/><path d="M900.4,372.0 Q899.2,406.0 894.7,440.0" stroke="#a88481" stroke-width="6.9" opacity="0.30" fill="none"/><path d="M909.9,372.0 Q909.1,406.0 907.2,439.0" stroke="#fbe9e5" stroke-width="4.6" opacity="0.37" fill="none"/><path d="M919.4,372.0 Q921.1,406.0 916.7,440.0" stroke="#a88481" stroke-width="6.9" opacity="0.31" fill="none"/><path d="M926.2,372.0 Q925.4,406.0 922.2,439.0" stroke="#fbe9e5" stroke-width="3.5" opacity="0.24" fill="none"/><path d="M933.0,372.0 Q932.2,406.0 930.9,440.0" stroke="#a88481" stroke-width="4.0" opacity="0.27" fill="none"/><path d="M939.3,372.0 Q938.6,406.0 935.9,439.0" stroke="#fbe9e5" stroke-width="5.5" opacity="0.32" fill="none"/><path d="M945.5,372.0 Q945.5,406.0 944.5,440.0" stroke="#a88481" stroke-width="4.2" opacity="0.32" fill="none"/><path d="M952.8,372.0 Q950.9,406.0 952.0,439.0" stroke="#fbe9e5" stroke-width="5.5" opacity="0.20" fill="none"/><path d="M960.1,372.0 Q959.5,406.0 959.4,440.0" stroke="#a88481" stroke-width="4.0" opacity="0.19" fill="none"/><path d="M969.2,372.0 Q967.9,406.0 970.1,439.0" stroke="#fbe9e5" stroke-width="3.6" opacity="0.39" fill="none"/><path d="M978.4,372.0 Q980.1,406.0 977.9,440.0" stroke="#a88481" stroke-width="5.1" opacity="0.25" fill="none"/><path d="M988.1,372.0 Q989.2,406.0 986.7,439.0" stroke="#fbe9e5" stroke-width="5.2" opacity="0.40" fill="none"/><path d="M997.8,372.0 Q996.0,406.0 1000.9,440.0" stroke="#a88481" stroke-width="4.3" opacity="0.23" fill="none"/><path d="M1007.2,372.0 Q1007.7,406.0 1010.2,439.0" stroke="#fbe9e5" stroke-width="4.0" opacity="0.43" fill="none"/><path d="M1016.7,372.0 Q1015.9,406.0 1018.4,440.0" stroke="#a88481" stroke-width="4.5" opacity="0.19" fill="none"/><path d="M1024.9,372.0 Q1023.5,406.0 1028.1,439.0" stroke="#fbe9e5" stroke-width="6.0" opacity="0.24" fill="none"/><path d="M1033.0,372.0 Q1035.0,406.0 1036.6,440.0" stroke="#a88481" stroke-width="5.2" opacity="0.21" fill="none"/><path d="M1039.2,372.0 Q1039.6,406.0 1044.0,439.0" stroke="#fbe9e5" stroke-width="4.4" opacity="0.31" fill="none"/><path d="M1045.4,372.0 Q1047.1,406.0 1047.7,440.0" stroke="#a88481" stroke-width="5.5" opacity="0.30" fill="none"/><path d="M1051.7,372.0 Q1050.2,406.0 1056.7,439.0" stroke="#fbe9e5" stroke-width="5.8" opacity="0.36" fill="none"/><path d="M1057.9,372.0 Q1056.3,406.0 1062.5,440.0" stroke="#a88481" stroke-width="4.4" opacity="0.30" fill="none"/><path d="M1067.0,372.0 Q1066.2,406.0 1071.8,439.0" stroke="#fbe9e5" stroke-width="6.0" opacity="0.41" fill="none"/><path d="M1076.2,372.0 Q1076.0,406.0 1082.1,440.0" stroke="#a88481" stroke-width="6.2" opacity="0.25" fill="none"/><path d="M1086.1,372.0 Q1085.3,406.0 1091.7,439.0" stroke="#fbe9e5" stroke-width="3.4" opacity="0.29" fill="none"/><path d="M1096.0,372.0 Q1097.8,406.0 1103.7,440.0" stroke="#a88481" stroke-width="5.5" opacity="0.23" fill="none"/><path d="M1105.9,372.0 Q1104.3,406.0 1112.2,439.0" stroke="#fbe9e5" stroke-width="5.3" opacity="0.42" fill="none"/></g></g>
<path d="M1018,372 Q1024,395 1022,425 M1034,372 Q1038,398 1036,428 M1058,372 Q1064,398 1062,424" stroke="#f8e4e0" stroke-width="2" opacity="0.5" fill="none"/>
</svg></div>
<div class="a" style="left:1079px;top:11px;width:200px;height:25px;background:#1c1c1e"></div>
<div class="t" style="left:1142px;top:16px;color:#e0e0e0"><span class="k">사용자 뷰</span></div>
<svg class="a" style="left:1079px;top:11px" width="200" height="56" viewBox="1079 11 200 56">
  <path d="M1238.5 16 V31" stroke="#3a3a3c" stroke-width="1"/>
  <path d="M1242.5 18.5 L1249.5 25.5" stroke="#ddd" stroke-width="1.5"/>
  <path d="M1242 23.5 L1242 18 L1247.5 18 Z" fill="#ddd"/>
  <path d="M1261.5 19.5 L1269.5 27.5 M1269.5 19.5 L1261.5 27.5" stroke="#f0f0f0" stroke-width="2"/>
  <!-- folder -->
  <path d="M1087.5 57 L1087 49 L1087.5 47 L1091.5 47 L1092.5 48.5 L1098.5 48.5 L1098.5 50 L1099 50 L1098.5 57 Z" fill="#e0e0e0"/>
  <path d="M1087 50.3 L1099 50.3" stroke="#262628" stroke-width="0.8"/>
  <!-- save -->
  <path d="M1107 46.5 H1116.5 L1119 49 V57.5 H1107 Z" fill="#e0e0e0"/>
  <rect x="1109.5" y="46.5" width="6" height="4" fill="#262628"/>
  <rect x="1113" y="47" width="1.8" height="3" fill="#e0e0e0"/>
  <rect x="1109" y="54" width="8" height="0.8" fill="#262628"/>
  <!-- camera -->
  <rect x="1252" y="48" width="12" height="9" rx="1" fill="#e0e0e0"/>
  <rect x="1253" y="47" width="3" height="1.5" fill="#e0e0e0"/>
  <circle cx="1258.5" cy="52.5" r="2.6" fill="none" stroke="#262628" stroke-width="1.1"/>
</svg>
<!-- list -->
<div class="a" style="left:1079px;top:67px;width:200px;height:144px;background:#262628;overflow:hidden">
  <div class="a" style="left:0;top:1px;width:190px;height:50px;background:#2c3243"></div>
  <div class="a" style="left:0;top:102px;width:190px;height:1px;background:#38383b"></div>
  <div class="a" style="left:190px;top:0;width:10px;height:144px;background:#0f0f10"></div>
  <div class="a" style="left:192px;top:2px;width:6px;height:97px;border-radius:3px;background:#5e5e60"></div>
  <svg class="a" style="left:10px;top:6px" width="40" height="40" viewBox="0 0 40 40">
  <defs><linearGradient id="tg6" x1="0" y1="0" x2="0" y2="1"><stop offset="0" stop-color="#8e8e93"/><stop offset="0.35" stop-color="#b9b9be"/><stop offset="0.65" stop-color="#e4e4e9"/><stop offset="1" stop-color="#f2f2f6"/></linearGradient></defs>
  <rect width="40" height="40" fill="url(#tg6)"/>
  <g fill="#cdb3c7">
    <path d="M11.8 7 L28.2 7 L29.3 14 L10.7 14 Z"/>
    <path d="M9.5 14 L30.5 14 L31.7 20 L8.3 20 Z"/>
    <path d="M10.1 20 L29.9 20 L30.5 24 L9.5 24 Z"/>
    <path d="M8.9 24 L31.1 24 L31.7 30 L8.3 30 Z"/>
    <path d="M10.1 30 L29.9 30 L29.9 34 L10.1 34 Z"/>
  </g>
  <path d="M10.7 14 L29.3 14 M10.1 24 L29.9 24" stroke="#c05050" stroke-width="0.7" opacity="0.6"/>
</svg>
  <svg class="a" style="left:10px;top:57px" width="40" height="40" viewBox="0 0 40 40">
  <defs><linearGradient id="tg57" x1="0" y1="0" x2="0" y2="1"><stop offset="0" stop-color="#8e8e93"/><stop offset="0.35" stop-color="#b9b9be"/><stop offset="0.65" stop-color="#e4e4e9"/><stop offset="1" stop-color="#f2f2f6"/></linearGradient></defs>
  <rect width="40" height="40" fill="url(#tg57)"/>
  <g fill="#cdb3c7">
    <path d="M14.5 7 L25.5 7 L26.2 14 L13.8 14 Z"/>
    <path d="M13.0 14 L27.0 14 L27.8 20 L12.2 20 Z"/>
    <path d="M13.4 20 L26.6 20 L27.0 24 L13.0 24 Z"/>
    <path d="M12.6 24 L27.4 24 L27.8 30 L12.2 30 Z"/>
    <path d="M13.4 30 L26.6 30 L26.6 34 L13.4 34 Z"/>
  </g>
  <path d="M13.8 14 L26.2 14 M13.4 24 L26.6 24" stroke="#c05050" stroke-width="0.7" opacity="0.6"/>
</svg>
  <svg class="a" style="left:10px;top:108px" width="40" height="40" viewBox="0 0 40 40">
  <defs><linearGradient id="tg108" x1="0" y1="0" x2="0" y2="1"><stop offset="0" stop-color="#8e8e93"/><stop offset="0.35" stop-color="#b9b9be"/><stop offset="0.65" stop-color="#e4e4e9"/><stop offset="1" stop-color="#f2f2f6"/></linearGradient></defs>
  <rect width="40" height="40" fill="url(#tg108)"/>
  <g fill="#cdb3c7">
    <path d="M15.9 7 L24.1 7 L24.6 14 L15.3 14 Z"/>
    <path d="M14.8 14 L25.2 14 L25.9 20 L14.1 20 Z"/>
    <path d="M15.1 20 L24.9 20 L25.2 24 L14.8 24 Z"/>
    <path d="M14.4 24 L25.6 24 L25.9 30 L14.1 30 Z"/>
    <path d="M15.1 30 L24.9 30 L24.9 34 L15.1 34 Z"/>
  </g>
  <path d="M15.3 14 L24.6 14 M15.1 24 L24.9 24" stroke="#c05050" stroke-width="0.7" opacity="0.6"/>
</svg>
</div>
<div class="t" style="left:1139px;top:86px;color:#5aa5ee;letter-spacing:-0.15px">Custom_View_1</div>
<div class="t" style="left:1139px;top:137px;color:#e0e0e0;letter-spacing:-0.15px">Custom_View_2</div>
<div class="t" style="left:1139px;top:188px;color:#e0e0e0;letter-spacing:-0.15px">Custom_View_3</div>

<div id="tb1" class="a"></div>
<div id="tb2" class="a"></div>
<svg class="a" style="left:1308px;top:0" width="72" height="500" viewBox="1308 0 72 500">
  <defs>
    <linearGradient id="gclap" x1="0" y1="0" x2="0" y2="1"><stop offset="0" stop-color="#9a9a9c"/><stop offset="1" stop-color="#6a6a6c"/></linearGradient>
    <linearGradient id="gwhite" x1="0" y1="0" x2="0" y2="1"><stop offset="0" stop-color="#f4f4f4"/><stop offset="1" stop-color="#c8c8c8"/></linearGradient>
    <radialGradient id="gglow" cx="0.5" cy="0" r="0.9"><stop offset="0" stop-color="#888" stop-opacity="0.8"/><stop offset="1" stop-color="#444" stop-opacity="0"/></radialGradient>
  </defs>
  <!-- col1 row1: clapper + rotate -->
  <g>
    <rect x="1320" y="19" width="17" height="12" fill="url(#gclap)"/>
    <path d="M1320 16.5 L1337 16.5 L1337 19 L1320 19 Z" fill="#8a8a8c"/>
    <path d="M1322 19 L1324 16.5 M1326 19 L1328 16.5 M1330 19 L1332 16.5 M1334 19 L1336 16.5" stroke="#262628" stroke-width="1"/>
    <rect x="1321" y="22" width="15" height="1.3" fill="#3a3a3c"/>
    <path d="M1318 30 A3.8 3.8 0 0 1 1323.5 24.8 M1324 27 A3.8 3.8 0 0 1 1318.8 32.5" stroke="#eee" stroke-width="1.2" fill="none"/>
    <path d="M1322.5 23.5 L1324.5 25 L1322 26.2 Z M1320 31.5 L1318 33 L1320 34 Z" fill="#eee"/>
  </g>
  <!-- col1 row2: clapper + play -->
  <g>
    <rect x="1320" y="53" width="17" height="12" fill="url(#gclap)"/>
    <path d="M1320 50.5 L1337 50.5 L1337 53 L1320 53 Z" fill="#8a8a8c"/>
    <path d="M1322 53 L1324 50.5 M1326 53 L1328 50.5 M1330 53 L1332 50.5 M1334 53 L1336 50.5" stroke="#262628" stroke-width="1"/>
    <rect x="1321" y="56" width="15" height="1.3" fill="#3a3a3c"/>
    <path d="M1317 58 L1323.5 63 L1317 68 Z" fill="#d8d8d8"/>
  </g>
  <!-- col1 row3 selected -->
  <rect x="1309.5" y="80" width="33" height="30" rx="4" fill="#121213"/>
  <g>
    <rect x="1320" y="89" width="17" height="12" fill="url(#gwhite)"/>
    <path d="M1320 86.5 L1337 86.5 L1337 89 L1320 89 Z" fill="#f0f0f0"/>
    <path d="M1322 89 L1324 86.5 M1326 89 L1328 86.5 M1330 89 L1332 86.5 M1334 89 L1336 86.5" stroke="#121213" stroke-width="1"/>
    <rect x="1321" y="91.5" width="15" height="1.5" fill="#121213"/>
    <rect x="1317" y="94.5" width="8" height="7.5" fill="#3d8fe8"/>
  </g>
  <rect x="1311" y="117" width="30" height="1.3" fill="#141415"/>
  <!-- image stack -->
  <rect x="1331" y="136" width="7" height="9" fill="#6c6c6e"/>
  <rect x="1323" y="136" width="14" height="8" fill="#6c6c6e"/>
  <rect x="1315" y="140" width="16" height="12" rx="1" fill="url(#gwhite)"/>
  <circle cx="1319.5" cy="143.5" r="1.8" fill="#262628"/>
  <path d="M1316.5 151 L1321 146 L1324 148.5 L1329.5 143 L1329.5 151 Z" fill="#262628"/>
  <!-- camera window -->
  <rect x="1320" y="171" width="17" height="15" fill="none" stroke="#707072" stroke-width="1.2"/>
  <rect x="1320" y="171" width="17" height="2.5" fill="#707072"/>
  <rect x="1315" y="177.5" width="12.5" height="9.5" rx="1.5" fill="url(#gwhite)"/>
  <circle cx="1321.5" cy="182" r="2.7" fill="none" stroke="#262628" stroke-width="1.1"/>
  <!-- folder image -->
  <rect x="1319.5" y="206" width="15" height="11" fill="#eee"/>
  <circle cx="1323" cy="209.5" r="1.8" fill="#262628"/>
  <path d="M1320.5 215.5 L1325 211.5 L1327 213 L1333.5 208 L1333.5 215.5 Z" fill="#262628"/>
  <path d="M1315.5 210 L1318 210 L1318.5 222 L1335 222 L1336.5 214 L1315.5 214 Z" fill="#6e6e70"/>
  <path d="M1315.5 214 L1336.5 214 L1335 222 L1317 222 Z" fill="#6e6e70"/>
  <rect x="1311" y="236" width="30" height="1.3" fill="#141415"/>
  <!-- gear icons -->
  <g id="gearA">
    <rect x="1323" y="256" width="14" height="11" fill="#6e6e70"/>
    <path d="M1325 265 L1329 261 L1331 262.5 L1336 258 L1336 265 Z" fill="#262628"/>
  </g>
  <rect x="1323" y="291" width="14" height="11" rx="1.5" fill="#6e6e70"/>
  <circle cx="1331" cy="296.5" r="3" fill="none" stroke="#262628" stroke-width="1.1"/>
  <path d="M1330 324 Q1325.5 324 1325.5 329 Q1325.5 332 1328 334 L1328 337 L1332 337 L1332 334 Q1334.5 332 1334.5 329 Q1334.5 324 1330 324 Z" fill="#6e6e70"/>
  <path d="M1335.5 323.5 L1337.5 321.5 M1337 328.5 L1339 328.5 M1330 321 L1330 319" stroke="#6e6e70" stroke-width="1"/>
  <rect x="1323" y="361" width="14" height="11" fill="#6e6e70"/>
  <path d="M1323 358.5 L1337 358.5 L1337 361 L1323 361 Z" fill="#6e6e70"/>
  <path d="M1325 361 L1327 358.5 M1329 361 L1331 358.5 M1333 361 L1335 358.5" stroke="#262628" stroke-width="1"/>
  <g fill="#e6e6e6" stroke="#262628" stroke-width="0.8">
    <circle cx="1320" cy="266.5" r="4.6"/><circle cx="1320" cy="300.5" r="4.6"/><circle cx="1320" cy="335.5" r="4.6"/><circle cx="1320" cy="370.5" r="4.6"/>
  </g>
  <g stroke="#e6e6e6" stroke-width="2.2">
    <path d="M1320 260.5 V272.5 M1314 266.5 H1326 M1315.8 262.3 L1324.2 270.7 M1324.2 262.3 L1315.8 270.7"/>
    <path d="M1320 294.5 V306.5 M1314 300.5 H1326 M1315.8 296.3 L1324.2 304.7 M1324.2 296.3 L1315.8 304.7"/>
    <path d="M1320 329.5 V341.5 M1314 335.5 H1326 M1315.8 331.3 L1324.2 339.7 M1324.2 331.3 L1315.8 339.7"/>
    <path d="M1320 364.5 V376.5 M1314 370.5 H1326 M1315.8 366.3 L1324.2 374.7 M1324.2 366.3 L1315.8 374.7"/>
  </g>
  <g fill="#262628"><circle cx="1320" cy="266.5" r="1.7"/><circle cx="1320" cy="300.5" r="1.7"/><circle cx="1320" cy="335.5" r="1.7"/><circle cx="1320" cy="370.5" r="1.7"/></g>
  <rect x="1311" y="390" width="30" height="1.3" fill="#141415"/>
  <!-- magic wand -->
  <defs><linearGradient id="gwand" x1="0" y1="1" x2="1" y2="0"><stop offset="0" stop-color="#5a6cf0"/><stop offset="1" stop-color="#f07ad8"/></linearGradient></defs>
  <ellipse cx="1326" cy="418" rx="11" ry="3.5" transform="rotate(-12 1326 418)" fill="none" stroke="#7a6ef0" stroke-width="1.2"/>
  <path d="M1319 424 L1333 410" stroke="url(#gwand)" stroke-width="2"/>
  <path d="M1332 405 L1333.2 409 L1337 410 L1333.2 411 L1332 415 L1330.8 411 L1327 410 L1330.8 409 Z" fill="#f080d8"/>
  <path d="M1318 408 L1318.8 410.5 L1321 411 L1318.8 411.5 L1318 414 L1317.2 411.5 L1315 411 L1317.2 410.5 Z" fill="#b87af0"/>
  <path d="M1332 420 L1332.6 422 L1334.5 422.5 L1332.6 423 L1332 425 L1331.4 423 L1329.5 422.5 L1331.4 422 Z" fill="#6a7af0"/>
  <rect x="1311" y="439" width="30" height="1.3" fill="#141415"/>
  <!-- clapper cloud -->
  <rect x="1320" y="460" width="17" height="11" fill="#6e6e70"/>
  <path d="M1320 457.5 L1337 457.5 L1337 460 L1320 460 Z" fill="#6e6e70"/>
  <path d="M1322 460 L1324 457.5 M1326 460 L1328 457.5 M1330 460 L1332 457.5 M1334 460 L1336 457.5" stroke="#262628" stroke-width="1"/>
  <path d="M1315 471 Q1314 467 1317.5 467 Q1318.5 463.5 1322 464 Q1325.5 464.5 1325.5 467.5 Q1328 468 1327.5 471 Z" fill="#e8e8e8"/>
  <text x="1321" y="470.5" font-size="6" font-family="Liberation Sans" font-weight="bold" fill="#262628" text-anchor="middle">C</text>

  <!-- col2 -->
  <!-- down arrow box -->
  <path d="M1351 17 L1371 17 L1369 27 L1353 27 Z" fill="#5a5a5c"/>
  <path d="M1351 17 L1371 17 L1366 24 L1356 24 Z" fill="#6a6a6c"/>
  <path d="M1361 21 V32" stroke="#eee" stroke-width="1.6"/>
  <path d="M1357 28.5 L1361 33 L1365 28.5" stroke="#eee" stroke-width="1.6" fill="none"/>
  <!-- globe -->
  <circle cx="1361" cy="59.5" r="9" fill="none" stroke="#6a6a6c" stroke-width="1"/>
  <path d="M1352 57.5 Q1356 64 1361 62 Q1366 60 1370.5 57.5" stroke="#e8e8e8" stroke-width="2" fill="none"/>
  <path d="M1361.5 50.5 Q1354 56 1356 62 Q1358 67 1361.5 69" stroke="#e8e8e8" stroke-width="2" fill="none"/>
  <!-- arrow lines -->
  <path d="M1354 87 L1360 93 M1351.5 94 L1355 97.5 M1358 85 L1360 87" stroke="#666" stroke-width="2" stroke-linecap="round"/>
  <path d="M1356.5 90.5 L1368 102" stroke="#e0e0e0" stroke-width="2"/>
  <path d="M1370 104 L1369.5 97 L1363 103.5 Z" fill="#e0e0e0"/>
  <!-- cone light -->
  <defs><linearGradient id="gcone" gradientUnits="userSpaceOnUse" x1="1351" y1="120" x2="1366" y2="136"><stop offset="0" stop-color="#f0f0f0"/><stop offset="0.45" stop-color="#b0b0b2"/><stop offset="1" stop-color="#4a4a4c"/></linearGradient></defs>
  <path d="M1350.5 119.5 L1372 126 L1357 140.5 Z" fill="url(#gcone)"/>
  <ellipse cx="1364.5" cy="133.5" rx="9.5" ry="4.2" transform="rotate(-45 1364.5 133.5)" fill="#6a6a6c"/>
  <!-- disk light -->
  <path d="M1352 168 L1370 168 L1374 181 L1348 181 Z" fill="url(#gglow)"/>
  <ellipse cx="1361" cy="158.5" rx="9" ry="2.5" fill="#eee"/>
  <path d="M1352 158.5 L1352 161 Q1361 165 1370 161 L1370 158.5 Q1361 162 1352 158.5 Z" fill="#8a8a8c"/>
  <!-- dome -->
  <ellipse cx="1361" cy="206.5" rx="10" ry="2.5" fill="#3a3a3c"/>
  <path d="M1352.5 204 Q1352.5 191 1361 191 Q1369.5 191 1369.5 204 Q1361 206.5 1352.5 204 Z" fill="url(#gwhite)"/>
  <path d="M1360 191.5 Q1356 196 1357 204.5" stroke="#555" stroke-width="0.8" fill="none"/>
  <!-- lock camera -->
  <rect x="1355.5" y="227" width="16.5" height="13" rx="1.5" fill="#6e6e70"/>
  <circle cx="1364" cy="234" r="3.8" fill="none" stroke="#262628" stroke-width="1.3"/>
  <path d="M1351.5 235 V232.5 Q1351.5 229.5 1354 229.5 Q1356.5 229.5 1356.5 232.5 V235" stroke="#e6e6e6" stroke-width="1.3" fill="none"/>
  <rect x="1350" y="235" width="8" height="9" rx="1" fill="#e6e6e6"/>
  <rect x="1353.5" y="238" width="1.2" height="3" fill="#262628"/>
  <rect x="1346" y="257" width="30" height="1.3" fill="#141415"/>
</svg>

<div id="div2" class="a"></div>
<div id="rp" class="a"></div>
<div id="rpedge" class="a"></div>
<!-- top tab icons -->
<div class="a" style="left:1694px;top:0;width:31px;height:19px;background:#2b2b2d"></div>
<div class="a" style="left:1385px;top:18px;width:309px;height:2px;background:#3a3a3c"></div>
<div class="a" style="left:1385px;top:18px;width:34px;height:2px;background:#5aaaf2"></div>
<svg class="a" style="left:1385px;top:0" width="340" height="18" viewBox="1385 0 340 18">
  <!-- fabric cylinder -->
  <path d="M1395 -2 L1410.5 -2 L1408.5 8 Q1403 11 1397 8 Z" fill="#4f8fd0"/>
  <path d="M1397 -2 L1410.5 -2 L1409 5 Q1404 7 1398.5 5 Z" fill="#69b0f5"/>
  <!-- checker -->
  <rect x="1427" y="-1" width="16" height="11" fill="#fff" rx="1"/>
  <g fill="#222">
    <rect x="1429" y="-1" width="3" height="3"/><rect x="1435" y="-1" width="3" height="3"/>
    <rect x="1432" y="2" width="3" height="3"/><rect x="1438" y="2" width="3" height="3"/>
    <rect x="1429" y="5" width="3" height="3"/><rect x="1435" y="5" width="3" height="3"/>
  </g>
  <!-- button -->
  <circle cx="1467" cy="2" r="8" fill="#fff"/>
  <circle cx="1464.5" cy="4" r="1.3" fill="#222"/><circle cx="1469.5" cy="4" r="1.3" fill="#222"/>
  <circle cx="1464.5" cy="-0.5" r="1.3" fill="#222"/><circle cx="1469.5" cy="-0.5" r="1.3" fill="#222"/>
  <!-- pin -->
  <circle cx="1493" cy="2.3" r="2.3" fill="#fff"/><rect x="1493" y="1" width="14" height="2" fill="#fff"/>
  <!-- dashed line -->
  <path d="M1524 9.5 L1533.5 -0.5" stroke="#fff" stroke-width="2.2" stroke-dasharray="2.5 3.5" stroke-linecap="round"/>
  <!-- zigzag -->
  <path d="M1556 9 Q1555.5 5 1558 4 Q1560 5 1559.5 7 Q1559 4 1562 2 Q1564 3 1563 5 Q1563 1.5 1566 0 Q1568 0.5 1567.5 -1" stroke="#fff" stroke-width="1.6" fill="none"/>
  <!-- bow -->
  <path d="M1588 -1 L1603 -1 L1599 3 L1602 10 L1598 10 L1595.5 4 L1593 10 L1589 10 L1592 3 Z" fill="#c8c8c8"/>
  <path d="M1588 -1 L1603 -1 L1600 3 L1591 3 Z" fill="#fff"/>
  <!-- zipper -->
  <rect x="1623" y="-2" width="8.5" height="12" rx="3.5" fill="#fff"/>
  <rect x="1625" y="5" width="4.5" height="3" rx="1.2" fill="#262628"/><rect x="1626.5" y="-2" width="1.5" height="5" fill="#262628"/>
  <!-- two shapes -->
  <path d="M1651 10 L1651 -1 L1660 -1 L1660 10 Z" fill="#fff"/>
  <path d="M1660 10 L1661 4 L1659.5 -1 L1667 -1 L1667.5 4 L1666.5 10 Z" fill="none" stroke="#ddd" stroke-width="1.2"/>
  <!-- ruler -->
  <rect x="1683" y="-1" width="11" height="6.5" fill="#fff"/>
  <g stroke="#262628" stroke-width="0.8"><path d="M1685.5 -1 V2.5 M1688 -1 V2.5 M1690.5 -1 V2.5"/></g>
  <!-- arrows -->
  <path d="M1704.5 2.5 L1699.5 5.2 L1704.5 8 Z" fill="#eee"/>
  <path d="M1714.5 2.5 L1719.5 5.2 L1714.5 8 Z" fill="#eee"/>
</svg>
<!-- logo row -->
<svg class="a" style="left:1396px;top:42px" width="16" height="14" viewBox="1396 42 16 14">
  <defs><linearGradient id="lg1" gradientUnits="userSpaceOnUse" x1="0" y1="44" x2="0" y2="54"><stop offset="0" stop-color="#22d890"/><stop offset="0.55" stop-color="#2ab8d0"/><stop offset="1" stop-color="#3090f0"/></linearGradient></defs>
  <g stroke="url(#lg1)" stroke-width="1.4" fill="none">
    <path d="M1402.6 51 L1402.6 46.2 Q1402.6 44.3 1404.2 44.3 Q1405.8 44.3 1405.8 46.2 L1405.8 49"/>
    <path d="M1405.8 49 L1409 51.5 Q1410.3 53 1408.8 54 Q1407.5 54.6 1406.2 53.4 L1403.8 51.2"/>
    <path d="M1402.6 51 L1400 53.2 Q1398.6 54.4 1398 53 Q1397.6 51.6 1399.4 50.8 L1405.8 49.8"/>
  </g>
</svg>
<svg class="a" style="left:1608px;top:42px" width="60" height="14" viewBox="1608 42 60 14">
  <path d="M1615 44 Q1611 49 1611 51.5 A3.3 3.3 0 0 0 1617.6 51.5 Q1617.6 49 1615 44 Z" fill="#ccc"/>
  <path d="M1619.5 42.8 Q1616.5 47 1616.8 49.5 A2.8 2.8 0 0 0 1622.3 49.5 Q1622.3 47 1619.5 42.8 Z" fill="#ccc"/>
  <path d="M1629 45 L1633 45 L1634 46 L1641 46 L1641 54.5 L1629 54.5 Z" fill="#ccc"/>
  <path d="M1636 47.5 H1641.5 M1638.8 44.5 V50.5" stroke="#262628" stroke-width="3"/>
  <path d="M1636 47.5 H1641.5 M1638.8 44.5 V50.5" stroke="#ddd" stroke-width="1.3"/>
  <path d="M1653.7 53 Q1654.5 44 1659.5 44 Q1664.5 44 1665.3 53 Q1662 52 1659.5 50 Q1657 52 1653.7 53 Z" fill="#bbb"/>
</svg>
<div class="a" style="left:1625px;top:36px;width:1px;height:26px;background:#333336"></div>
<div class="a" style="left:1646px;top:36px;width:1px;height:26px;background:#333336"></div>
<div class="t" style="left:1670px;top:43px;color:#d6d6d6">CLOFAB</div>
<div class="a" style="left:1395px;top:68px;width:322px;height:1px;background:#3a3a3c"></div>
<div class="a" style="left:1395px;top:69px;width:330px;height:20px;background:#1f1f21"></div>
<svg class="a" style="left:1395px;top:69px" width="330" height="20" viewBox="1395 69 330 20">
  <path d="M1407.5 76 L1413 79 L1407.5 82 Z" fill="#eee"/>
  <path d="M1573.5 84.5 L1574.5 80.5 L1582.5 72.5 L1585.8 75.8 L1577.8 83.8 Z" fill="#fff"/>
  <path d="M1574.2 81 L1577.3 84.1" stroke="#1f1f21" stroke-width="0.9"/>
  <path d="M1668.5 79 H1679 M1673.75 74 V84.2" stroke="#fff" stroke-width="1.8"/>
  <path d="M1688.5 84.5 L1688 76 L1688.5 74 L1692.5 74 L1693.5 75.5 L1699.5 75.5 L1699.5 77 L1700 77 L1699.5 84.5 Z" fill="#fff"/>
  <path d="M1688 77.3 L1700 77.3" stroke="#1f1f21" stroke-width="0.8"/>
</svg>
<div class="t" style="left:1514px;top:72.5px;color:#d2d2d2">Primary</div>
<!-- band + header -->
<div class="a" style="left:1385px;top:202px;width:340px;height:5px;background:#1a1a1b"></div>
<div class="a" style="left:1385px;top:207px;width:340px;height:20px;background:#1f1f21"></div>
<svg class="a" style="left:1385px;top:207px" width="340" height="20" viewBox="1385 207 340 20">
  <path d="M1389.5 217 H1396 M1393 213.8 L1396.5 217 L1393 220.2" stroke="#eee" stroke-width="1.6" fill="none"/>
  <path d="M1400.5 211 V223" stroke="#3a3a3d" stroke-width="1"/>
  <rect x="1714" y="212.5" width="7" height="5.5" rx="1" fill="#1f1f21" stroke="#ccc" stroke-width="1.1"/>
  <path d="M1713.5 215.5 H1712 Q1711 215.5 1711 216.5 V220.5 Q1711 221.5 1712 221.5 H1717 Q1718 221.5 1718 220.5 V218.5" stroke="#ccc" stroke-width="1.1" fill="none"/>
</svg>
<div class="t" style="left:1538px;top:209px;color:#e0e0e0"><span class="k">속성창</span></div>
<svg class="a" style="left:1670px;top:230px" width="55" height="20" viewBox="1670 230 55 20">
  <path d="M1679.5 246 L1679 237.5 L1679.5 235.5 L1683.5 235.5 L1684.5 237 L1693 237 L1693 238.5 L1693.5 238.5 L1692.5 246 Z" fill="#ddd"/>
  <path d="M1679 238.8 L1693.5 238.8" stroke="#262628" stroke-width="0.8"/>
  <path d="M1701 234.5 H1712.5 L1715 237 V246 H1701 Z" fill="#ddd"/>
  <rect x="1703.5" y="234.5" width="7" height="4" fill="#262628"/>
  <rect x="1707.5" y="235" width="2" height="3" fill="#ddd"/>
  <rect x="1703" y="242" width="9" height="0.8" fill="#262628"/>
</svg>

<div class="t " style="left:1412px;top:233px;"><span class="k">렌더</span></div>
<div class="ln" style="left:1412px;top:253px;width:307px"></div>
<div class="tri" style="left:1397px;top:263px"></div>
<div class="t blue" style="left:1412px;top:259px;"><span class="k">렌더 엔진</span></div>
<div class="dd" style="left:1603px;top:254px;width:116px;height:25px"></div>
<div class="t " style="left:1609px;top:259.0px;">GPU (CUDA)</div>
<div class="ddtri" style="left:1705px;top:263.5px"></div>
<div class="ln" style="left:1412px;top:280px;width:307px"></div>
<div class="t " style="left:1431px;top:286px;">CPU <span class="k">동시 사용</span></div>
<div class="cbon" style="left:1608px;top:287px"><svg width="12" height="12" viewBox="0 0 12 12"><path d="M2.6 6.2 L5 8.6 L9.6 3.4" stroke="#1d2430" stroke-width="1.8" fill="none"/></svg></div>
<div class="t " style="left:1626px;top:286.5px;">On</div>
<div class="ln" style="left:1431px;top:306px;width:283px"></div>
<div class="t " style="left:1431px;top:312px;">GPU <span class="k">우선순위 낮추기</span></div>
<div class="cb" style="left:1608px;top:313px"></div>
<div class="t " style="left:1626px;top:312.5px;">Off</div>
<div class="ln" style="left:1431px;top:332px;width:283px"></div>
<div class="tri" style="left:1397px;top:339px"></div>
<div class="t blue" style="left:1412px;top:335px;"><span class="k">렌더 완료 조건</span></div>
<div class="ln" style="left:1412px;top:352px;width:307px"></div>
<div class="t " style="left:1431px;top:367.5px;"><span class="k">노이즈 양</span></div>
<div class="inp" style="left:1625px;top:354px;width:81px;height:21px"></div>
<div class="t " style="left:1633px;top:357.0px;">0.010</div>
<div class="trk" style="left:1624px;top:384px;width:84px"></div>
<div class="fill" style="left:1624px;top:384px;width:13.5px"></div>
<div class="knob" style="left:1632.5px;top:381px"></div>
<div class="ln" style="left:1431px;top:397px;width:283px"></div>
<div class="t " style="left:1431px;top:412px;"><span class="k">최대 렌더 시간</span> (<span class="k">분</span>)</div>
<div class="inp" style="left:1625px;top:399px;width:81px;height:21px"></div>
<div class="t " style="left:1633px;top:402.0px;">8</div>
<div class="trk" style="left:1624px;top:429px;width:84px"></div>
<div class="fill" style="left:1624px;top:429px;width:11.5px"></div>
<div class="knob" style="left:1630.5px;top:426px"></div>
<div class="ln" style="left:1431px;top:442px;width:283px"></div>
<div class="tri" style="left:1397px;top:449.5px"></div>
<div class="t blue" style="left:1412px;top:445.5px;"><span class="k">글로벌 맵</span></div>
<div class="ln" style="left:1412px;top:462px;width:307px"></div>
<div class="t " style="left:1431px;top:477.5px;"><span class="k">재봉선 퍼커링 강도</span></div>
<div class="inp" style="left:1625px;top:464px;width:81px;height:21px"></div>
<div class="t " style="left:1633px;top:467.0px;">2.0</div>
<div class="trk" style="left:1624px;top:494px;width:84px"></div>
<div class="fill" style="left:1624px;top:494px;width:35.5px"></div>
<div class="knob" style="left:1654.5px;top:491px"></div>
<div class="ln" style="left:1431px;top:507px;width:283px"></div>
<div class="tri" style="left:1397px;top:514px"></div>
<div class="t blue" style="left:1412px;top:510px;"><span class="k">퀄리티</span></div>
<div class="ln" style="left:1412px;top:527px;width:307px"></div>
<div class="t " style="left:1431px;top:533.5px;"><span class="k">조명</span></div>
<div class="dd" style="left:1598px;top:529px;width:116px;height:25px"></div>
<div class="t " style="left:1604px;top:534.0px;">High</div>
<div class="ddtri" style="left:1700px;top:538.5px"></div>
<div class="ln" style="left:1431px;top:554px;width:283px"></div>
<div class="t " style="left:1431px;top:560.5px;"><span class="k">재질</span></div>
<div class="dd" style="left:1598px;top:556px;width:116px;height:25px"></div>
<div class="t " style="left:1604px;top:561.0px;">Medium</div>
<div class="ddtri" style="left:1700px;top:565.5px"></div>
<div class="ln" style="left:1431px;top:581px;width:283px"></div>
<div class="tri" style="left:1397px;top:588px"></div>
<div class="t blue" style="left:1412px;top:584.5px;">Mesh Optimization (Final Render Only)</div>
<div class="ln" style="left:1412px;top:601px;width:307px"></div>
<div class="tri" style="left:1416px;top:608.5px"></div>
<div class="t " style="left:1431px;top:604.5px;">Knitwear</div>
<div class="ln" style="left:1431px;top:621px;width:283px"></div>
<div class="t " style="left:1450px;top:627.5px;">Frustum Culling</div>
<div class="cb" style="left:1603px;top:628px"></div>
<div class="t " style="left:1621px;top:627.5px;">Off</div>
<div class="ln" style="left:1450px;top:647px;width:259px"></div>
<div class="t " style="left:1450px;top:653.5px;">LOD</div>
<div class="cb" style="left:1603px;top:654px"></div>
<div class="t " style="left:1621px;top:653.5px;">Off</div>
<div class="ln" style="left:1450px;top:673px;width:259px"></div>
<div class="tri" style="left:1397px;top:680.5px"></div>
<div class="t blue" style="left:1412px;top:676.5px;">Color Mapping</div>
<div class="ln" style="left:1412px;top:693px;width:307px"></div>
<div class="tri" style="left:1416px;top:704px"></div>
<div class="t " style="left:1431px;top:700px;"><span class="k">종류</span></div>
<div class="dd" style="left:1590px;top:695px;width:124px;height:25px"></div>
<div class="t " style="left:1596px;top:700.0px;">Reinhard</div>
<div class="ddtri" style="left:1700px;top:704.5px"></div>
<div class="ln" style="left:1431px;top:720px;width:283px"></div>
<div class="t " style="left:1450px;top:735.5px;">Burn Value</div>
<div class="inp" style="left:1620px;top:722px;width:81px;height:21px"></div>
<div class="t " style="left:1628px;top:725.0px;">1.00</div>
<div class="trk" style="left:1619px;top:752px;width:83px"></div>
<div class="fill" style="left:1619px;top:752px;width:78.5px"></div>
<div class="knob" style="left:1692.5px;top:749px"></div>
<div class="ln" style="left:1450px;top:765px;width:259px"></div>
<div class="t " style="left:1431px;top:771.5px;">Linear Workflow</div>
<div class="cbon" style="left:1608px;top:772px"><svg width="12" height="12" viewBox="0 0 12 12"><path d="M2.6 6.2 L5 8.6 L9.6 3.4" stroke="#1d2430" stroke-width="1.8" fill="none"/></svg></div>
<div class="t " style="left:1626px;top:771.5px;">On</div>
<div class="ln" style="left:1431px;top:791px;width:283px"></div>
<div class="tri" style="left:1397px;top:798.5px"></div>
<div class="t blue" style="left:1412px;top:794.5px;">Image Filter</div>
<div class="ln" style="left:1412px;top:811px;width:307px"></div>
<div class="t " style="left:1431px;top:826.5px;"><span class="k">크기</span></div>
<div class="inp" style="left:1625px;top:812px;width:81px;height:22px"></div>
<div class="t " style="left:1633px;top:815.5px;">1.50</div>
<div class="trk" style="left:1624px;top:843px;width:84px"></div>
<div class="fill" style="left:1624px;top:843px;width:9.5px"></div>
<div class="knob" style="left:1628.5px;top:840px"></div>
<div class="ln" style="left:1431px;top:856px;width:283px"></div>
</body></html>
